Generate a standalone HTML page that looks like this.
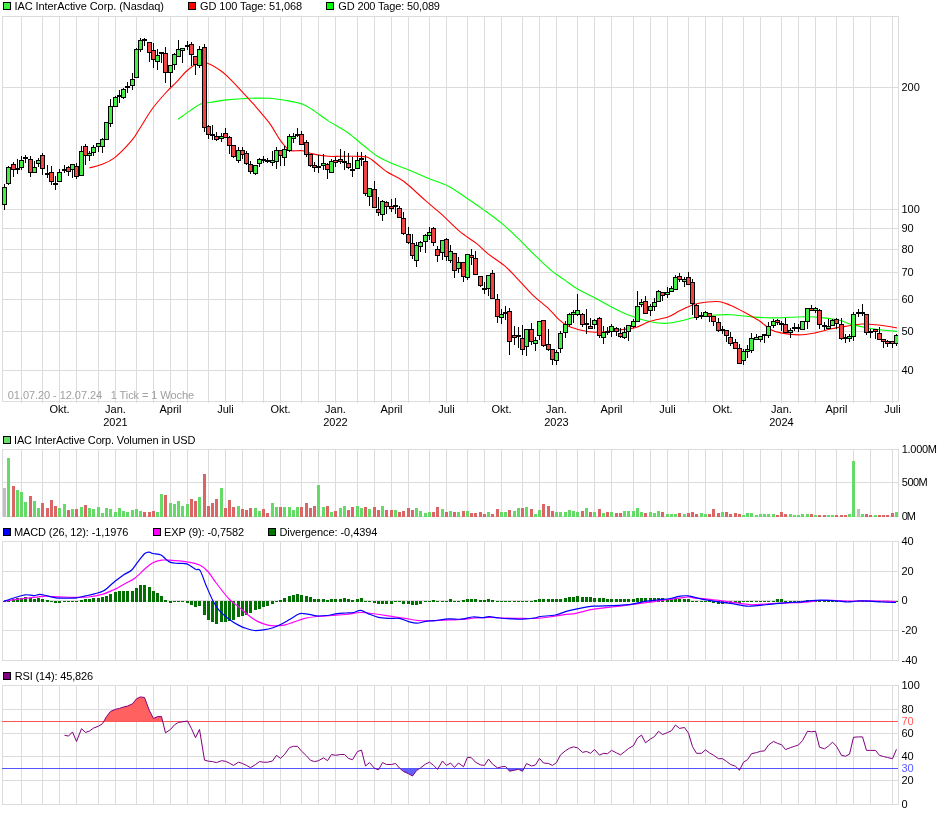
<!DOCTYPE html><html><head><meta charset="utf-8"><style>html,body{margin:0;padding:0;background:#fff;width:940px;height:814px;overflow:hidden}svg{display:block;will-change:transform;font-family:"Liberation Sans",sans-serif}</style></head><body><svg width="940" height="814" viewBox="0 0 940 814" font-family="Liberation Sans, sans-serif">
<rect width="940" height="814" fill="#fff"/>
<rect x="21" y="16" width="1" height="385" fill="#dcdcdc"/>
<rect x="42" y="16" width="1" height="385" fill="#dcdcdc"/>
<rect x="59" y="16" width="1" height="385" fill="#dcdcdc"/>
<rect x="76" y="16" width="1" height="385" fill="#dcdcdc"/>
<rect x="98" y="16" width="1" height="385" fill="#dcdcdc"/>
<rect x="115" y="16" width="1" height="385" fill="#dcdcdc"/>
<rect x="136" y="16" width="1" height="385" fill="#dcdcdc"/>
<rect x="153" y="16" width="1" height="385" fill="#dcdcdc"/>
<rect x="170" y="16" width="1" height="385" fill="#dcdcdc"/>
<rect x="187" y="16" width="1" height="385" fill="#dcdcdc"/>
<rect x="208" y="16" width="1" height="385" fill="#dcdcdc"/>
<rect x="225" y="16" width="1" height="385" fill="#dcdcdc"/>
<rect x="242" y="16" width="1" height="385" fill="#dcdcdc"/>
<rect x="263" y="16" width="1" height="385" fill="#dcdcdc"/>
<rect x="280" y="16" width="1" height="385" fill="#dcdcdc"/>
<rect x="301" y="16" width="1" height="385" fill="#dcdcdc"/>
<rect x="318" y="16" width="1" height="385" fill="#dcdcdc"/>
<rect x="335" y="16" width="1" height="385" fill="#dcdcdc"/>
<rect x="357" y="16" width="1" height="385" fill="#dcdcdc"/>
<rect x="374" y="16" width="1" height="385" fill="#dcdcdc"/>
<rect x="391" y="16" width="1" height="385" fill="#dcdcdc"/>
<rect x="408" y="16" width="1" height="385" fill="#dcdcdc"/>
<rect x="429" y="16" width="1" height="385" fill="#dcdcdc"/>
<rect x="446" y="16" width="1" height="385" fill="#dcdcdc"/>
<rect x="467" y="16" width="1" height="385" fill="#dcdcdc"/>
<rect x="484" y="16" width="1" height="385" fill="#dcdcdc"/>
<rect x="501" y="16" width="1" height="385" fill="#dcdcdc"/>
<rect x="522" y="16" width="1" height="385" fill="#dcdcdc"/>
<rect x="539" y="16" width="1" height="385" fill="#dcdcdc"/>
<rect x="556" y="16" width="1" height="385" fill="#dcdcdc"/>
<rect x="577" y="16" width="1" height="385" fill="#dcdcdc"/>
<rect x="594" y="16" width="1" height="385" fill="#dcdcdc"/>
<rect x="611" y="16" width="1" height="385" fill="#dcdcdc"/>
<rect x="633" y="16" width="1" height="385" fill="#dcdcdc"/>
<rect x="650" y="16" width="1" height="385" fill="#dcdcdc"/>
<rect x="667" y="16" width="1" height="385" fill="#dcdcdc"/>
<rect x="688" y="16" width="1" height="385" fill="#dcdcdc"/>
<rect x="705" y="16" width="1" height="385" fill="#dcdcdc"/>
<rect x="722" y="16" width="1" height="385" fill="#dcdcdc"/>
<rect x="743" y="16" width="1" height="385" fill="#dcdcdc"/>
<rect x="760" y="16" width="1" height="385" fill="#dcdcdc"/>
<rect x="781" y="16" width="1" height="385" fill="#dcdcdc"/>
<rect x="798" y="16" width="1" height="385" fill="#dcdcdc"/>
<rect x="815" y="16" width="1" height="385" fill="#dcdcdc"/>
<rect x="836" y="16" width="1" height="385" fill="#dcdcdc"/>
<rect x="853" y="16" width="1" height="385" fill="#dcdcdc"/>
<rect x="870" y="16" width="1" height="385" fill="#dcdcdc"/>
<rect x="892" y="16" width="1" height="385" fill="#dcdcdc"/>
<rect x="2" y="87" width="896" height="1" fill="#dcdcdc"/>
<rect x="2" y="209" width="896" height="1" fill="#dcdcdc"/>
<rect x="2" y="228" width="896" height="1" fill="#dcdcdc"/>
<rect x="2" y="249" width="896" height="1" fill="#dcdcdc"/>
<rect x="2" y="272" width="896" height="1" fill="#dcdcdc"/>
<rect x="2" y="299" width="896" height="1" fill="#dcdcdc"/>
<rect x="2" y="331" width="896" height="1" fill="#dcdcdc"/>
<rect x="2" y="370" width="896" height="1" fill="#dcdcdc"/>
<rect x="2.5" y="16.5" width="896" height="385" fill="none" stroke="#dcdcdc" stroke-width="1"/>
<text x="901.5" y="90.5" text-anchor="start" fill="#000" font-size="11">200</text>
<text x="901.5" y="212.5" text-anchor="start" fill="#000" font-size="11">100</text>
<text x="901.5" y="231.5" text-anchor="start" fill="#000" font-size="11">90</text>
<text x="901.5" y="252.5" text-anchor="start" fill="#000" font-size="11">80</text>
<text x="901.5" y="275.5" text-anchor="start" fill="#000" font-size="11">70</text>
<text x="901.5" y="302.5" text-anchor="start" fill="#000" font-size="11">60</text>
<text x="901.5" y="334.5" text-anchor="start" fill="#000" font-size="11">50</text>
<text x="901.5" y="373.5" text-anchor="start" fill="#000" font-size="11">40</text>
<rect x="21" y="401" width="1" height="2" fill="#dcdcdc"/>
<rect x="42" y="401" width="1" height="2" fill="#dcdcdc"/>
<rect x="59" y="401" width="1" height="2" fill="#dcdcdc"/>
<rect x="76" y="401" width="1" height="2" fill="#dcdcdc"/>
<rect x="98" y="401" width="1" height="2" fill="#dcdcdc"/>
<rect x="115" y="401" width="1" height="2" fill="#dcdcdc"/>
<rect x="136" y="401" width="1" height="2" fill="#dcdcdc"/>
<rect x="153" y="401" width="1" height="2" fill="#dcdcdc"/>
<rect x="170" y="401" width="1" height="2" fill="#dcdcdc"/>
<rect x="187" y="401" width="1" height="2" fill="#dcdcdc"/>
<rect x="208" y="401" width="1" height="2" fill="#dcdcdc"/>
<rect x="225" y="401" width="1" height="2" fill="#dcdcdc"/>
<rect x="242" y="401" width="1" height="2" fill="#dcdcdc"/>
<rect x="263" y="401" width="1" height="2" fill="#dcdcdc"/>
<rect x="280" y="401" width="1" height="2" fill="#dcdcdc"/>
<rect x="301" y="401" width="1" height="2" fill="#dcdcdc"/>
<rect x="318" y="401" width="1" height="2" fill="#dcdcdc"/>
<rect x="335" y="401" width="1" height="2" fill="#dcdcdc"/>
<rect x="357" y="401" width="1" height="2" fill="#dcdcdc"/>
<rect x="374" y="401" width="1" height="2" fill="#dcdcdc"/>
<rect x="391" y="401" width="1" height="2" fill="#dcdcdc"/>
<rect x="408" y="401" width="1" height="2" fill="#dcdcdc"/>
<rect x="429" y="401" width="1" height="2" fill="#dcdcdc"/>
<rect x="446" y="401" width="1" height="2" fill="#dcdcdc"/>
<rect x="467" y="401" width="1" height="2" fill="#dcdcdc"/>
<rect x="484" y="401" width="1" height="2" fill="#dcdcdc"/>
<rect x="501" y="401" width="1" height="2" fill="#dcdcdc"/>
<rect x="522" y="401" width="1" height="2" fill="#dcdcdc"/>
<rect x="539" y="401" width="1" height="2" fill="#dcdcdc"/>
<rect x="556" y="401" width="1" height="2" fill="#dcdcdc"/>
<rect x="577" y="401" width="1" height="2" fill="#dcdcdc"/>
<rect x="594" y="401" width="1" height="2" fill="#dcdcdc"/>
<rect x="611" y="401" width="1" height="2" fill="#dcdcdc"/>
<rect x="633" y="401" width="1" height="2" fill="#dcdcdc"/>
<rect x="650" y="401" width="1" height="2" fill="#dcdcdc"/>
<rect x="667" y="401" width="1" height="2" fill="#dcdcdc"/>
<rect x="688" y="401" width="1" height="2" fill="#dcdcdc"/>
<rect x="705" y="401" width="1" height="2" fill="#dcdcdc"/>
<rect x="722" y="401" width="1" height="2" fill="#dcdcdc"/>
<rect x="743" y="401" width="1" height="2" fill="#dcdcdc"/>
<rect x="760" y="401" width="1" height="2" fill="#dcdcdc"/>
<rect x="781" y="401" width="1" height="2" fill="#dcdcdc"/>
<rect x="798" y="401" width="1" height="2" fill="#dcdcdc"/>
<rect x="815" y="401" width="1" height="2" fill="#dcdcdc"/>
<rect x="836" y="401" width="1" height="2" fill="#dcdcdc"/>
<rect x="853" y="401" width="1" height="2" fill="#dcdcdc"/>
<rect x="870" y="401" width="1" height="2" fill="#dcdcdc"/>
<rect x="892" y="401" width="1" height="2" fill="#dcdcdc"/>
<rect x="3.5" y="2.5" width="7" height="7" fill="#40f040" stroke="#000" stroke-width="1"/>
<text x="14.4" y="10" text-anchor="start" fill="#000" font-size="11" textLength="149.62" lengthAdjust="spacing">IAC InterActive Corp. (Nasdaq)</text>
<rect x="188.5" y="2.5" width="7" height="7" fill="#ff0000" stroke="#000" stroke-width="1"/>
<text x="200.1" y="10" text-anchor="start" fill="#000" font-size="11" textLength="101.99" lengthAdjust="spacing">GD 100 Tage: 51,068</text>
<rect x="326.5" y="2.5" width="7" height="7" fill="#00ff00" stroke="#000" stroke-width="1"/>
<text x="338.3" y="10" text-anchor="start" fill="#000" font-size="11" textLength="101.69" lengthAdjust="spacing">GD 200 Tage: 50,089</text>
<text x="7.8" y="399" text-anchor="start" fill="#a0a0a0" font-size="11" textLength="94.32" lengthAdjust="spacing">01.07.20 - 12.07.24</text>
<text x="110.7" y="399" text-anchor="start" fill="#a0a0a0" font-size="11" textLength="83.38" lengthAdjust="spacing">1 Tick = 1 Woche</text>
<text x="59.5" y="413" text-anchor="middle" fill="#000" font-size="11">Okt.</text>
<text x="115.5" y="413" text-anchor="middle" fill="#000" font-size="11">Jan.</text>
<text x="170.5" y="413" text-anchor="middle" fill="#000" font-size="11">April</text>
<text x="225.5" y="413" text-anchor="middle" fill="#000" font-size="11">Juli</text>
<text x="280.5" y="413" text-anchor="middle" fill="#000" font-size="11">Okt.</text>
<text x="335.5" y="413" text-anchor="middle" fill="#000" font-size="11">Jan.</text>
<text x="391.5" y="413" text-anchor="middle" fill="#000" font-size="11">April</text>
<text x="446.5" y="413" text-anchor="middle" fill="#000" font-size="11">Juli</text>
<text x="501.5" y="413" text-anchor="middle" fill="#000" font-size="11">Okt.</text>
<text x="556.5" y="413" text-anchor="middle" fill="#000" font-size="11">Jan.</text>
<text x="611.5" y="413" text-anchor="middle" fill="#000" font-size="11">April</text>
<text x="667.5" y="413" text-anchor="middle" fill="#000" font-size="11">Juli</text>
<text x="722.5" y="413" text-anchor="middle" fill="#000" font-size="11">Okt.</text>
<text x="781.5" y="413" text-anchor="middle" fill="#000" font-size="11">Jan.</text>
<text x="836.5" y="413" text-anchor="middle" fill="#000" font-size="11">April</text>
<text x="892.5" y="413" text-anchor="middle" fill="#000" font-size="11">Juli</text>
<text x="115.5" y="426" text-anchor="middle" fill="#000" font-size="11">2021</text>
<text x="335.5" y="426" text-anchor="middle" fill="#000" font-size="11">2022</text>
<text x="556.5" y="426" text-anchor="middle" fill="#000" font-size="11">2023</text>
<text x="781.5" y="426" text-anchor="middle" fill="#000" font-size="11">2024</text>
<rect x="21" y="449" width="1" height="67" fill="#dcdcdc"/>
<rect x="42" y="449" width="1" height="67" fill="#dcdcdc"/>
<rect x="59" y="449" width="1" height="67" fill="#dcdcdc"/>
<rect x="76" y="449" width="1" height="67" fill="#dcdcdc"/>
<rect x="98" y="449" width="1" height="67" fill="#dcdcdc"/>
<rect x="115" y="449" width="1" height="67" fill="#dcdcdc"/>
<rect x="136" y="449" width="1" height="67" fill="#dcdcdc"/>
<rect x="153" y="449" width="1" height="67" fill="#dcdcdc"/>
<rect x="170" y="449" width="1" height="67" fill="#dcdcdc"/>
<rect x="187" y="449" width="1" height="67" fill="#dcdcdc"/>
<rect x="208" y="449" width="1" height="67" fill="#dcdcdc"/>
<rect x="225" y="449" width="1" height="67" fill="#dcdcdc"/>
<rect x="242" y="449" width="1" height="67" fill="#dcdcdc"/>
<rect x="263" y="449" width="1" height="67" fill="#dcdcdc"/>
<rect x="280" y="449" width="1" height="67" fill="#dcdcdc"/>
<rect x="301" y="449" width="1" height="67" fill="#dcdcdc"/>
<rect x="318" y="449" width="1" height="67" fill="#dcdcdc"/>
<rect x="335" y="449" width="1" height="67" fill="#dcdcdc"/>
<rect x="357" y="449" width="1" height="67" fill="#dcdcdc"/>
<rect x="374" y="449" width="1" height="67" fill="#dcdcdc"/>
<rect x="391" y="449" width="1" height="67" fill="#dcdcdc"/>
<rect x="408" y="449" width="1" height="67" fill="#dcdcdc"/>
<rect x="429" y="449" width="1" height="67" fill="#dcdcdc"/>
<rect x="446" y="449" width="1" height="67" fill="#dcdcdc"/>
<rect x="467" y="449" width="1" height="67" fill="#dcdcdc"/>
<rect x="484" y="449" width="1" height="67" fill="#dcdcdc"/>
<rect x="501" y="449" width="1" height="67" fill="#dcdcdc"/>
<rect x="522" y="449" width="1" height="67" fill="#dcdcdc"/>
<rect x="539" y="449" width="1" height="67" fill="#dcdcdc"/>
<rect x="556" y="449" width="1" height="67" fill="#dcdcdc"/>
<rect x="577" y="449" width="1" height="67" fill="#dcdcdc"/>
<rect x="594" y="449" width="1" height="67" fill="#dcdcdc"/>
<rect x="611" y="449" width="1" height="67" fill="#dcdcdc"/>
<rect x="633" y="449" width="1" height="67" fill="#dcdcdc"/>
<rect x="650" y="449" width="1" height="67" fill="#dcdcdc"/>
<rect x="667" y="449" width="1" height="67" fill="#dcdcdc"/>
<rect x="688" y="449" width="1" height="67" fill="#dcdcdc"/>
<rect x="705" y="449" width="1" height="67" fill="#dcdcdc"/>
<rect x="722" y="449" width="1" height="67" fill="#dcdcdc"/>
<rect x="743" y="449" width="1" height="67" fill="#dcdcdc"/>
<rect x="760" y="449" width="1" height="67" fill="#dcdcdc"/>
<rect x="781" y="449" width="1" height="67" fill="#dcdcdc"/>
<rect x="798" y="449" width="1" height="67" fill="#dcdcdc"/>
<rect x="815" y="449" width="1" height="67" fill="#dcdcdc"/>
<rect x="836" y="449" width="1" height="67" fill="#dcdcdc"/>
<rect x="853" y="449" width="1" height="67" fill="#dcdcdc"/>
<rect x="870" y="449" width="1" height="67" fill="#dcdcdc"/>
<rect x="892" y="449" width="1" height="67" fill="#dcdcdc"/>
<rect x="2" y="482" width="896" height="1" fill="#dcdcdc"/>
<rect x="2.5" y="449.5" width="896" height="67" fill="none" stroke="#dcdcdc" stroke-width="1"/>
<rect x="3.5" y="436.5" width="7" height="7" fill="#66dd66" stroke="#000" stroke-width="1"/>
<text x="14.0" y="444" text-anchor="start" fill="#000" font-size="11" textLength="181.48" lengthAdjust="spacing">IAC InterActive Corp. Volumen in USD</text>
<text x="901.8" y="452.5" text-anchor="start" fill="#000" font-size="11" textLength="35.10" lengthAdjust="spacing">1.000M</text>
<text x="901.8" y="485.5" text-anchor="start" fill="#000" font-size="11" textLength="25.90" lengthAdjust="spacing">500M</text>
<text x="901.8" y="519.5" text-anchor="start" fill="#000" font-size="11" textLength="14.00" lengthAdjust="spacing">0M</text>
<rect x="21" y="541" width="1" height="119" fill="#dcdcdc"/>
<rect x="42" y="541" width="1" height="119" fill="#dcdcdc"/>
<rect x="59" y="541" width="1" height="119" fill="#dcdcdc"/>
<rect x="76" y="541" width="1" height="119" fill="#dcdcdc"/>
<rect x="98" y="541" width="1" height="119" fill="#dcdcdc"/>
<rect x="115" y="541" width="1" height="119" fill="#dcdcdc"/>
<rect x="136" y="541" width="1" height="119" fill="#dcdcdc"/>
<rect x="153" y="541" width="1" height="119" fill="#dcdcdc"/>
<rect x="170" y="541" width="1" height="119" fill="#dcdcdc"/>
<rect x="187" y="541" width="1" height="119" fill="#dcdcdc"/>
<rect x="208" y="541" width="1" height="119" fill="#dcdcdc"/>
<rect x="225" y="541" width="1" height="119" fill="#dcdcdc"/>
<rect x="242" y="541" width="1" height="119" fill="#dcdcdc"/>
<rect x="263" y="541" width="1" height="119" fill="#dcdcdc"/>
<rect x="280" y="541" width="1" height="119" fill="#dcdcdc"/>
<rect x="301" y="541" width="1" height="119" fill="#dcdcdc"/>
<rect x="318" y="541" width="1" height="119" fill="#dcdcdc"/>
<rect x="335" y="541" width="1" height="119" fill="#dcdcdc"/>
<rect x="357" y="541" width="1" height="119" fill="#dcdcdc"/>
<rect x="374" y="541" width="1" height="119" fill="#dcdcdc"/>
<rect x="391" y="541" width="1" height="119" fill="#dcdcdc"/>
<rect x="408" y="541" width="1" height="119" fill="#dcdcdc"/>
<rect x="429" y="541" width="1" height="119" fill="#dcdcdc"/>
<rect x="446" y="541" width="1" height="119" fill="#dcdcdc"/>
<rect x="467" y="541" width="1" height="119" fill="#dcdcdc"/>
<rect x="484" y="541" width="1" height="119" fill="#dcdcdc"/>
<rect x="501" y="541" width="1" height="119" fill="#dcdcdc"/>
<rect x="522" y="541" width="1" height="119" fill="#dcdcdc"/>
<rect x="539" y="541" width="1" height="119" fill="#dcdcdc"/>
<rect x="556" y="541" width="1" height="119" fill="#dcdcdc"/>
<rect x="577" y="541" width="1" height="119" fill="#dcdcdc"/>
<rect x="594" y="541" width="1" height="119" fill="#dcdcdc"/>
<rect x="611" y="541" width="1" height="119" fill="#dcdcdc"/>
<rect x="633" y="541" width="1" height="119" fill="#dcdcdc"/>
<rect x="650" y="541" width="1" height="119" fill="#dcdcdc"/>
<rect x="667" y="541" width="1" height="119" fill="#dcdcdc"/>
<rect x="688" y="541" width="1" height="119" fill="#dcdcdc"/>
<rect x="705" y="541" width="1" height="119" fill="#dcdcdc"/>
<rect x="722" y="541" width="1" height="119" fill="#dcdcdc"/>
<rect x="743" y="541" width="1" height="119" fill="#dcdcdc"/>
<rect x="760" y="541" width="1" height="119" fill="#dcdcdc"/>
<rect x="781" y="541" width="1" height="119" fill="#dcdcdc"/>
<rect x="798" y="541" width="1" height="119" fill="#dcdcdc"/>
<rect x="815" y="541" width="1" height="119" fill="#dcdcdc"/>
<rect x="836" y="541" width="1" height="119" fill="#dcdcdc"/>
<rect x="853" y="541" width="1" height="119" fill="#dcdcdc"/>
<rect x="870" y="541" width="1" height="119" fill="#dcdcdc"/>
<rect x="892" y="541" width="1" height="119" fill="#dcdcdc"/>
<rect x="2" y="571" width="896" height="1" fill="#dcdcdc"/>
<rect x="2" y="600" width="896" height="1" fill="#dcdcdc"/>
<rect x="2" y="630" width="896" height="1" fill="#dcdcdc"/>
<rect x="2.5" y="541.5" width="896" height="119" fill="none" stroke="#dcdcdc" stroke-width="1"/>
<rect x="3.5" y="528.5" width="7" height="7" fill="#0000ff" stroke="#000" stroke-width="1"/>
<text x="14.0" y="536" text-anchor="start" fill="#000" font-size="11" textLength="114.28" lengthAdjust="spacing">MACD (26, 12): -1,1976</text>
<rect x="153.5" y="528.5" width="7" height="7" fill="#ff00ff" stroke="#000" stroke-width="1"/>
<text x="164.0" y="536" text-anchor="start" fill="#000" font-size="11" textLength="80.13" lengthAdjust="spacing">EXP (9): -0,7582</text>
<rect x="268.5" y="528.5" width="7" height="7" fill="#007700" stroke="#000" stroke-width="1"/>
<text x="279.4" y="536" text-anchor="start" fill="#000" font-size="11" textLength="98.06" lengthAdjust="spacing">Divergence: -0,4394</text>
<text x="901.5" y="544.5" text-anchor="start" fill="#000" font-size="11">40</text>
<text x="901.5" y="574.5" text-anchor="start" fill="#000" font-size="11">20</text>
<text x="901.5" y="603.5" text-anchor="start" fill="#000" font-size="11">0</text>
<text x="901.5" y="633.5" text-anchor="start" fill="#000" font-size="11">-20</text>
<text x="901.5" y="663.5" text-anchor="start" fill="#000" font-size="11">-40</text>
<rect x="21" y="685" width="1" height="119" fill="#dcdcdc"/>
<rect x="42" y="685" width="1" height="119" fill="#dcdcdc"/>
<rect x="59" y="685" width="1" height="119" fill="#dcdcdc"/>
<rect x="76" y="685" width="1" height="119" fill="#dcdcdc"/>
<rect x="98" y="685" width="1" height="119" fill="#dcdcdc"/>
<rect x="115" y="685" width="1" height="119" fill="#dcdcdc"/>
<rect x="136" y="685" width="1" height="119" fill="#dcdcdc"/>
<rect x="153" y="685" width="1" height="119" fill="#dcdcdc"/>
<rect x="170" y="685" width="1" height="119" fill="#dcdcdc"/>
<rect x="187" y="685" width="1" height="119" fill="#dcdcdc"/>
<rect x="208" y="685" width="1" height="119" fill="#dcdcdc"/>
<rect x="225" y="685" width="1" height="119" fill="#dcdcdc"/>
<rect x="242" y="685" width="1" height="119" fill="#dcdcdc"/>
<rect x="263" y="685" width="1" height="119" fill="#dcdcdc"/>
<rect x="280" y="685" width="1" height="119" fill="#dcdcdc"/>
<rect x="301" y="685" width="1" height="119" fill="#dcdcdc"/>
<rect x="318" y="685" width="1" height="119" fill="#dcdcdc"/>
<rect x="335" y="685" width="1" height="119" fill="#dcdcdc"/>
<rect x="357" y="685" width="1" height="119" fill="#dcdcdc"/>
<rect x="374" y="685" width="1" height="119" fill="#dcdcdc"/>
<rect x="391" y="685" width="1" height="119" fill="#dcdcdc"/>
<rect x="408" y="685" width="1" height="119" fill="#dcdcdc"/>
<rect x="429" y="685" width="1" height="119" fill="#dcdcdc"/>
<rect x="446" y="685" width="1" height="119" fill="#dcdcdc"/>
<rect x="467" y="685" width="1" height="119" fill="#dcdcdc"/>
<rect x="484" y="685" width="1" height="119" fill="#dcdcdc"/>
<rect x="501" y="685" width="1" height="119" fill="#dcdcdc"/>
<rect x="522" y="685" width="1" height="119" fill="#dcdcdc"/>
<rect x="539" y="685" width="1" height="119" fill="#dcdcdc"/>
<rect x="556" y="685" width="1" height="119" fill="#dcdcdc"/>
<rect x="577" y="685" width="1" height="119" fill="#dcdcdc"/>
<rect x="594" y="685" width="1" height="119" fill="#dcdcdc"/>
<rect x="611" y="685" width="1" height="119" fill="#dcdcdc"/>
<rect x="633" y="685" width="1" height="119" fill="#dcdcdc"/>
<rect x="650" y="685" width="1" height="119" fill="#dcdcdc"/>
<rect x="667" y="685" width="1" height="119" fill="#dcdcdc"/>
<rect x="688" y="685" width="1" height="119" fill="#dcdcdc"/>
<rect x="705" y="685" width="1" height="119" fill="#dcdcdc"/>
<rect x="722" y="685" width="1" height="119" fill="#dcdcdc"/>
<rect x="743" y="685" width="1" height="119" fill="#dcdcdc"/>
<rect x="760" y="685" width="1" height="119" fill="#dcdcdc"/>
<rect x="781" y="685" width="1" height="119" fill="#dcdcdc"/>
<rect x="798" y="685" width="1" height="119" fill="#dcdcdc"/>
<rect x="815" y="685" width="1" height="119" fill="#dcdcdc"/>
<rect x="836" y="685" width="1" height="119" fill="#dcdcdc"/>
<rect x="853" y="685" width="1" height="119" fill="#dcdcdc"/>
<rect x="870" y="685" width="1" height="119" fill="#dcdcdc"/>
<rect x="892" y="685" width="1" height="119" fill="#dcdcdc"/>
<rect x="2" y="709" width="896" height="1" fill="#dcdcdc"/>
<rect x="2" y="733" width="896" height="1" fill="#dcdcdc"/>
<rect x="2" y="756" width="896" height="1" fill="#dcdcdc"/>
<rect x="2" y="780" width="896" height="1" fill="#dcdcdc"/>
<rect x="2.5" y="685.5" width="896" height="119" fill="none" stroke="#dcdcdc" stroke-width="1"/>
<rect x="3.5" y="672.5" width="7" height="7" fill="#800080" stroke="#000" stroke-width="1"/>
<text x="14.8" y="680" text-anchor="start" fill="#000" font-size="11" textLength="78.32" lengthAdjust="spacing">RSI (14): 45,826</text>
<text x="901.5" y="688.5" text-anchor="start" fill="#000" font-size="11">100</text>
<text x="901.5" y="712.5" text-anchor="start" fill="#000" font-size="11">80</text>
<text x="901.5" y="736.5" text-anchor="start" fill="#000" font-size="11">60</text>
<text x="901.5" y="759.5" text-anchor="start" fill="#000" font-size="11">40</text>
<text x="901.5" y="783.5" text-anchor="start" fill="#000" font-size="11">20</text>
<text x="901.5" y="807.5" text-anchor="start" fill="#000" font-size="11">0</text>
<text x="901.5" y="724.5" text-anchor="start" fill="#ff5a5a" font-size="11">70</text>
<text x="901.5" y="771.5" text-anchor="start" fill="#5a5aff" font-size="11">30</text>
<defs><clipPath id="cp"><rect x="2" y="16" width="896" height="385"/></clipPath></defs>
<g clip-path="url(#cp)">
<path d="M178.10,119.20 C180.12,117.77 186.47,113.13 190.20,110.60 C193.93,108.07 197.07,105.38 200.50,104.00 C203.93,102.62 206.50,102.98 210.80,102.30 C215.10,101.62 219.82,100.57 226.30,99.90 C232.78,99.23 242.53,98.57 249.70,98.30 C256.87,98.03 263.42,97.97 269.30,98.30 C275.18,98.63 279.43,99.32 285.00,100.30 C290.57,101.28 297.78,102.40 302.70,104.20 C307.62,106.00 310.23,108.32 314.50,111.10 C318.77,113.88 322.73,117.30 328.30,120.90 C333.87,124.50 342.02,128.60 347.90,132.70 C353.78,136.80 358.68,141.57 363.60,145.50 C368.52,149.43 373.13,153.52 377.40,156.30 C381.67,159.08 383.98,159.93 389.20,162.20 C394.42,164.47 402.33,167.27 408.70,169.90 C415.07,172.53 420.78,175.28 427.40,178.00 C434.02,180.72 442.18,183.08 448.40,186.20 C454.62,189.32 458.87,192.80 464.70,196.70 C470.53,200.60 477.17,205.12 483.40,209.60 C489.63,214.08 496.27,218.75 502.10,223.60 C507.93,228.45 512.95,233.45 518.40,238.70 C523.85,243.95 529.35,249.83 534.80,255.10 C540.25,260.37 546.15,266.17 551.10,270.30 C556.05,274.43 559.87,276.65 564.50,279.90 C569.13,283.15 573.48,286.63 578.90,289.80 C584.32,292.97 591.27,295.88 597.00,298.90 C602.73,301.92 607.57,305.03 613.30,307.90 C619.03,310.77 625.37,313.83 631.40,316.10 C637.43,318.37 643.48,320.30 649.50,321.50 C655.52,322.70 661.48,323.60 667.50,323.30 C673.52,323.00 680.47,320.85 685.60,319.70 C690.73,318.55 693.78,317.15 698.30,316.40 C702.82,315.65 707.38,315.48 712.70,315.20 C718.02,314.92 723.92,314.45 730.20,314.70 C736.48,314.95 743.67,316.17 750.40,316.70 C757.13,317.23 763.85,317.80 770.60,317.90 C777.35,318.00 784.83,317.50 790.90,317.30 C796.97,317.10 801.62,316.60 807.00,316.70 C812.38,316.80 817.80,317.30 823.20,317.90 C828.60,318.50 834.68,319.22 839.40,320.30 C844.12,321.38 846.78,323.12 851.50,324.40 C856.22,325.68 862.65,327.07 867.70,328.00 C872.75,328.93 876.92,329.43 881.80,330.00 C886.68,330.57 894.47,331.17 897.00,331.40" fill="none" stroke="#00ff00" stroke-width="1.1"/>
<path d="M89.50,167.90 C91.37,167.38 96.55,166.47 100.70,164.80 C104.85,163.13 109.25,161.92 114.40,157.90 C119.55,153.88 127.30,145.72 131.60,140.70 C135.90,135.68 136.75,133.12 140.20,127.80 C143.65,122.48 148.00,114.68 152.30,108.80 C156.60,102.92 161.98,96.93 166.00,92.50 C170.02,88.07 172.95,85.78 176.40,82.20 C179.85,78.62 183.27,74.02 186.70,71.00 C190.13,67.98 193.55,65.40 197.00,64.10 C200.45,62.80 203.38,62.05 207.40,63.20 C211.42,64.35 217.38,68.42 221.10,71.00 C224.82,73.58 226.25,75.30 229.70,78.70 C233.15,82.10 237.82,87.15 241.80,91.40 C245.78,95.65 249.02,98.95 253.60,104.20 C258.18,109.45 265.05,117.17 269.30,122.90 C273.55,128.63 276.15,134.35 279.10,138.60 C282.05,142.85 285.03,146.37 287.00,148.40 C288.97,150.43 288.28,150.40 290.90,150.80 C293.52,151.20 299.10,150.28 302.70,150.80 C306.30,151.32 308.23,152.98 312.50,153.90 C316.77,154.82 323.70,155.90 328.30,156.30 C332.90,156.70 335.52,156.30 340.10,156.30 C344.68,156.30 351.22,156.13 355.80,156.30 C360.38,156.47 364.00,155.98 367.60,157.30 C371.20,158.62 374.13,161.75 377.40,164.20 C380.67,166.65 382.77,169.12 387.20,172.00 C391.63,174.88 397.70,176.80 404.00,181.50 C410.30,186.20 418.77,194.75 425.00,200.20 C431.23,205.65 435.57,208.95 441.40,214.20 C447.23,219.45 454.17,226.83 460.00,231.70 C465.83,236.57 471.72,239.70 476.40,243.40 C481.08,247.10 483.43,250.20 488.10,253.90 C492.77,257.60 499.73,261.70 504.40,265.60 C509.07,269.50 511.42,272.43 516.10,277.30 C520.78,282.17 527.05,289.55 532.50,294.80 C537.95,300.05 544.38,304.65 548.80,308.80 C553.22,312.95 555.78,316.83 559.00,319.70 C562.22,322.57 564.18,324.20 568.10,326.00 C572.02,327.80 577.98,329.45 582.50,330.50 C587.02,331.55 590.97,332.15 595.20,332.30 C599.43,332.45 603.38,331.85 607.90,331.40 C612.42,330.95 617.62,330.25 622.30,329.60 C626.98,328.95 631.38,328.88 636.00,327.50 C640.62,326.12 644.67,323.05 650.00,321.30 C655.33,319.55 662.97,318.78 668.00,317.00 C673.03,315.22 675.75,312.72 680.20,310.60 C684.65,308.48 690.18,305.73 694.70,304.30 C699.22,302.87 703.07,302.43 707.30,302.00 C711.53,301.57 716.28,301.17 720.10,301.70 C723.92,302.23 726.15,303.45 730.20,305.20 C734.25,306.95 739.68,309.68 744.40,312.20 C749.12,314.72 754.13,317.43 758.50,320.30 C762.87,323.17 766.88,327.30 770.60,329.40 C774.32,331.50 776.08,331.98 780.80,332.90 C785.52,333.82 793.18,334.90 798.90,334.90 C804.62,334.90 809.70,333.92 815.10,332.90 C820.50,331.88 825.90,329.95 831.30,328.80 C836.70,327.65 842.45,326.80 847.50,326.00 C852.55,325.20 856.88,324.20 861.60,324.00 C866.32,323.80 871.75,324.47 875.80,324.80 C879.85,325.13 882.37,325.47 885.90,326.00 C889.43,326.53 895.15,327.67 897.00,328.00" fill="none" stroke="#ff0000" stroke-width="1.1"/>
</g>
<g clip-path="url(#cp)" shape-rendering="crispEdges">
<rect x="4" y="184" width="1" height="26" fill="#000"/>
<rect x="2" y="187" width="5" height="18" fill="#000"/>
<rect x="3" y="188" width="3" height="16" fill="#44ee44"/>
<rect x="8" y="166" width="1" height="19" fill="#000"/>
<rect x="6" y="167" width="5" height="17" fill="#000"/>
<rect x="7" y="168" width="3" height="15" fill="#44ee44"/>
<rect x="13" y="162" width="1" height="15" fill="#000"/>
<rect x="11" y="164" width="5" height="6" fill="#000"/>
<rect x="12" y="165" width="3" height="4" fill="#ee4444"/>
<rect x="17" y="159" width="1" height="15" fill="#000"/>
<rect x="15" y="168" width="5" height="2" fill="#000"/>
<rect x="21" y="156" width="1" height="14" fill="#000"/>
<rect x="19" y="160" width="5" height="8" fill="#000"/>
<rect x="20" y="161" width="3" height="6" fill="#44ee44"/>
<rect x="25" y="155" width="1" height="8" fill="#000"/>
<rect x="23" y="157" width="5" height="2" fill="#000"/>
<rect x="30" y="156" width="1" height="21" fill="#000"/>
<rect x="28" y="159" width="5" height="14" fill="#000"/>
<rect x="29" y="160" width="3" height="12" fill="#ee4444"/>
<rect x="34" y="161" width="1" height="12" fill="#000"/>
<rect x="32" y="167" width="5" height="6" fill="#000"/>
<rect x="33" y="168" width="3" height="4" fill="#44ee44"/>
<rect x="38" y="158" width="1" height="9" fill="#000"/>
<rect x="36" y="160" width="5" height="4" fill="#000"/>
<rect x="37" y="161" width="3" height="2" fill="#44ee44"/>
<rect x="42" y="153" width="1" height="22" fill="#000"/>
<rect x="40" y="155" width="5" height="14" fill="#000"/>
<rect x="41" y="156" width="3" height="12" fill="#ee4444"/>
<rect x="47" y="165" width="1" height="13" fill="#000"/>
<rect x="45" y="173" width="5" height="2" fill="#000"/>
<rect x="51" y="166" width="1" height="19" fill="#000"/>
<rect x="49" y="172" width="5" height="10" fill="#000"/>
<rect x="50" y="173" width="3" height="8" fill="#ee4444"/>
<rect x="55" y="176" width="1" height="14" fill="#000"/>
<rect x="53" y="183" width="5" height="2" fill="#000"/>
<rect x="59" y="169" width="1" height="13" fill="#000"/>
<rect x="57" y="172" width="5" height="10" fill="#000"/>
<rect x="58" y="173" width="3" height="8" fill="#44ee44"/>
<rect x="64" y="165" width="1" height="8" fill="#000"/>
<rect x="62" y="169" width="5" height="2" fill="#000"/>
<rect x="68" y="166" width="1" height="10" fill="#000"/>
<rect x="66" y="167" width="5" height="5" fill="#000"/>
<rect x="67" y="168" width="3" height="3" fill="#ee4444"/>
<rect x="72" y="164" width="1" height="14" fill="#000"/>
<rect x="70" y="164" width="5" height="6" fill="#000"/>
<rect x="71" y="165" width="3" height="4" fill="#44ee44"/>
<rect x="76" y="163" width="1" height="16" fill="#000"/>
<rect x="74" y="166" width="5" height="11" fill="#000"/>
<rect x="75" y="167" width="3" height="9" fill="#ee4444"/>
<rect x="81" y="146" width="1" height="30" fill="#000"/>
<rect x="79" y="151" width="5" height="25" fill="#000"/>
<rect x="80" y="152" width="3" height="23" fill="#44ee44"/>
<rect x="85" y="144" width="1" height="21" fill="#000"/>
<rect x="83" y="146" width="5" height="10" fill="#000"/>
<rect x="84" y="147" width="3" height="8" fill="#ee4444"/>
<rect x="89" y="151" width="1" height="10" fill="#000"/>
<rect x="87" y="153" width="5" height="3" fill="#000"/>
<rect x="88" y="154" width="3" height="1" fill="#44ee44"/>
<rect x="93" y="145" width="1" height="11" fill="#000"/>
<rect x="91" y="147" width="5" height="6" fill="#000"/>
<rect x="92" y="148" width="3" height="4" fill="#44ee44"/>
<rect x="98" y="143" width="1" height="9" fill="#000"/>
<rect x="96" y="143" width="5" height="4" fill="#000"/>
<rect x="97" y="144" width="3" height="2" fill="#44ee44"/>
<rect x="102" y="138" width="1" height="15" fill="#000"/>
<rect x="100" y="139" width="5" height="8" fill="#000"/>
<rect x="101" y="140" width="3" height="6" fill="#44ee44"/>
<rect x="106" y="122" width="1" height="18" fill="#000"/>
<rect x="104" y="122" width="5" height="18" fill="#000"/>
<rect x="105" y="123" width="3" height="16" fill="#44ee44"/>
<rect x="110" y="99" width="1" height="28" fill="#000"/>
<rect x="108" y="106" width="5" height="18" fill="#000"/>
<rect x="109" y="107" width="3" height="16" fill="#44ee44"/>
<rect x="115" y="96" width="1" height="11" fill="#000"/>
<rect x="113" y="97" width="5" height="10" fill="#000"/>
<rect x="114" y="98" width="3" height="8" fill="#44ee44"/>
<rect x="119" y="90" width="1" height="13" fill="#000"/>
<rect x="117" y="95" width="5" height="2" fill="#000"/>
<rect x="123" y="88" width="1" height="11" fill="#000"/>
<rect x="121" y="89" width="5" height="9" fill="#000"/>
<rect x="122" y="90" width="3" height="7" fill="#44ee44"/>
<rect x="127" y="82" width="1" height="11" fill="#000"/>
<rect x="125" y="86" width="5" height="2" fill="#000"/>
<rect x="132" y="73" width="1" height="17" fill="#000"/>
<rect x="130" y="79" width="5" height="7" fill="#000"/>
<rect x="131" y="80" width="3" height="5" fill="#44ee44"/>
<rect x="136" y="48" width="1" height="30" fill="#000"/>
<rect x="134" y="49" width="5" height="29" fill="#000"/>
<rect x="135" y="50" width="3" height="27" fill="#44ee44"/>
<rect x="140" y="38" width="1" height="14" fill="#000"/>
<rect x="138" y="40" width="5" height="10" fill="#000"/>
<rect x="139" y="41" width="3" height="8" fill="#44ee44"/>
<rect x="144" y="38" width="1" height="8" fill="#000"/>
<rect x="142" y="39" width="5" height="2" fill="#000"/>
<rect x="149" y="42" width="1" height="20" fill="#000"/>
<rect x="147" y="42" width="5" height="11" fill="#000"/>
<rect x="148" y="43" width="3" height="9" fill="#ee4444"/>
<rect x="153" y="43" width="1" height="25" fill="#000"/>
<rect x="151" y="50" width="5" height="10" fill="#000"/>
<rect x="152" y="51" width="3" height="8" fill="#ee4444"/>
<rect x="157" y="49" width="1" height="21" fill="#000"/>
<rect x="155" y="55" width="5" height="7" fill="#000"/>
<rect x="156" y="56" width="3" height="5" fill="#44ee44"/>
<rect x="161" y="52" width="1" height="11" fill="#000"/>
<rect x="159" y="52" width="5" height="2" fill="#000"/>
<rect x="165" y="47" width="1" height="36" fill="#000"/>
<rect x="163" y="53" width="5" height="20" fill="#000"/>
<rect x="164" y="54" width="3" height="18" fill="#ee4444"/>
<rect x="170" y="65" width="1" height="22" fill="#000"/>
<rect x="168" y="65" width="5" height="8" fill="#000"/>
<rect x="169" y="66" width="3" height="6" fill="#44ee44"/>
<rect x="174" y="53" width="1" height="17" fill="#000"/>
<rect x="172" y="54" width="5" height="11" fill="#000"/>
<rect x="173" y="55" width="3" height="9" fill="#44ee44"/>
<rect x="178" y="40" width="1" height="17" fill="#000"/>
<rect x="176" y="49" width="5" height="8" fill="#000"/>
<rect x="177" y="50" width="3" height="6" fill="#44ee44"/>
<rect x="182" y="48" width="1" height="15" fill="#000"/>
<rect x="180" y="48" width="5" height="3" fill="#000"/>
<rect x="181" y="49" width="3" height="1" fill="#44ee44"/>
<rect x="187" y="41" width="1" height="9" fill="#000"/>
<rect x="185" y="45" width="5" height="2" fill="#000"/>
<rect x="191" y="42" width="1" height="24" fill="#000"/>
<rect x="189" y="44" width="5" height="11" fill="#000"/>
<rect x="190" y="45" width="3" height="9" fill="#ee4444"/>
<rect x="195" y="56" width="1" height="19" fill="#000"/>
<rect x="193" y="56" width="5" height="9" fill="#000"/>
<rect x="194" y="57" width="3" height="7" fill="#ee4444"/>
<rect x="199" y="46" width="1" height="22" fill="#000"/>
<rect x="197" y="49" width="5" height="17" fill="#000"/>
<rect x="198" y="50" width="3" height="15" fill="#44ee44"/>
<rect x="204" y="44" width="1" height="88" fill="#000"/>
<rect x="202" y="47" width="5" height="81" fill="#000"/>
<rect x="203" y="48" width="3" height="79" fill="#ee4444"/>
<rect x="208" y="125" width="1" height="14" fill="#000"/>
<rect x="206" y="126" width="5" height="9" fill="#000"/>
<rect x="207" y="127" width="3" height="7" fill="#ee4444"/>
<rect x="212" y="125" width="1" height="15" fill="#000"/>
<rect x="210" y="134" width="5" height="2" fill="#000"/>
<rect x="216" y="132" width="1" height="9" fill="#000"/>
<rect x="214" y="136" width="5" height="4" fill="#000"/>
<rect x="215" y="137" width="3" height="2" fill="#ee4444"/>
<rect x="221" y="133" width="1" height="9" fill="#000"/>
<rect x="219" y="136" width="5" height="3" fill="#000"/>
<rect x="220" y="137" width="3" height="1" fill="#44ee44"/>
<rect x="225" y="128" width="1" height="9" fill="#000"/>
<rect x="223" y="133" width="5" height="5" fill="#000"/>
<rect x="224" y="134" width="3" height="3" fill="#ee4444"/>
<rect x="229" y="136" width="1" height="18" fill="#000"/>
<rect x="227" y="137" width="5" height="9" fill="#000"/>
<rect x="228" y="138" width="3" height="7" fill="#ee4444"/>
<rect x="233" y="145" width="1" height="13" fill="#000"/>
<rect x="231" y="145" width="5" height="12" fill="#000"/>
<rect x="232" y="146" width="3" height="10" fill="#ee4444"/>
<rect x="238" y="147" width="1" height="16" fill="#000"/>
<rect x="236" y="150" width="5" height="11" fill="#000"/>
<rect x="237" y="151" width="3" height="9" fill="#44ee44"/>
<rect x="242" y="147" width="1" height="12" fill="#000"/>
<rect x="240" y="150" width="5" height="5" fill="#000"/>
<rect x="241" y="151" width="3" height="3" fill="#ee4444"/>
<rect x="246" y="151" width="1" height="14" fill="#000"/>
<rect x="244" y="153" width="5" height="11" fill="#000"/>
<rect x="245" y="154" width="3" height="9" fill="#ee4444"/>
<rect x="250" y="161" width="1" height="13" fill="#000"/>
<rect x="248" y="164" width="5" height="8" fill="#000"/>
<rect x="249" y="165" width="3" height="6" fill="#ee4444"/>
<rect x="255" y="165" width="1" height="10" fill="#000"/>
<rect x="253" y="165" width="5" height="9" fill="#000"/>
<rect x="254" y="166" width="3" height="7" fill="#44ee44"/>
<rect x="259" y="158" width="1" height="9" fill="#000"/>
<rect x="257" y="159" width="5" height="5" fill="#000"/>
<rect x="258" y="160" width="3" height="3" fill="#44ee44"/>
<rect x="263" y="156" width="1" height="7" fill="#000"/>
<rect x="261" y="159" width="5" height="2" fill="#000"/>
<rect x="267" y="158" width="1" height="5" fill="#000"/>
<rect x="265" y="160" width="5" height="2" fill="#000"/>
<rect x="272" y="151" width="1" height="15" fill="#000"/>
<rect x="270" y="160" width="5" height="3" fill="#000"/>
<rect x="271" y="161" width="3" height="1" fill="#44ee44"/>
<rect x="276" y="147" width="1" height="22" fill="#000"/>
<rect x="274" y="150" width="5" height="12" fill="#000"/>
<rect x="275" y="151" width="3" height="10" fill="#44ee44"/>
<rect x="280" y="150" width="1" height="16" fill="#000"/>
<rect x="278" y="150" width="5" height="6" fill="#000"/>
<rect x="279" y="151" width="3" height="4" fill="#ee4444"/>
<rect x="284" y="146" width="1" height="20" fill="#000"/>
<rect x="282" y="149" width="5" height="9" fill="#000"/>
<rect x="283" y="150" width="3" height="7" fill="#44ee44"/>
<rect x="289" y="134" width="1" height="18" fill="#000"/>
<rect x="287" y="136" width="5" height="15" fill="#000"/>
<rect x="288" y="137" width="3" height="13" fill="#44ee44"/>
<rect x="293" y="133" width="1" height="10" fill="#000"/>
<rect x="291" y="136" width="5" height="3" fill="#000"/>
<rect x="292" y="137" width="3" height="1" fill="#44ee44"/>
<rect x="297" y="128" width="1" height="9" fill="#000"/>
<rect x="295" y="134" width="5" height="2" fill="#000"/>
<rect x="301" y="131" width="1" height="13" fill="#000"/>
<rect x="299" y="134" width="5" height="11" fill="#000"/>
<rect x="300" y="135" width="3" height="9" fill="#ee4444"/>
<rect x="306" y="140" width="1" height="17" fill="#000"/>
<rect x="304" y="142" width="5" height="13" fill="#000"/>
<rect x="305" y="143" width="3" height="11" fill="#ee4444"/>
<rect x="310" y="154" width="1" height="13" fill="#000"/>
<rect x="308" y="154" width="5" height="12" fill="#000"/>
<rect x="309" y="155" width="3" height="10" fill="#ee4444"/>
<rect x="314" y="162" width="1" height="10" fill="#000"/>
<rect x="312" y="165" width="5" height="3" fill="#000"/>
<rect x="313" y="166" width="3" height="1" fill="#ee4444"/>
<rect x="318" y="155" width="1" height="18" fill="#000"/>
<rect x="316" y="166" width="5" height="2" fill="#000"/>
<rect x="323" y="154" width="1" height="16" fill="#000"/>
<rect x="321" y="163" width="5" height="3" fill="#000"/>
<rect x="322" y="164" width="3" height="1" fill="#44ee44"/>
<rect x="327" y="163" width="1" height="16" fill="#000"/>
<rect x="325" y="164" width="5" height="6" fill="#000"/>
<rect x="326" y="165" width="3" height="4" fill="#ee4444"/>
<rect x="331" y="159" width="1" height="14" fill="#000"/>
<rect x="329" y="161" width="5" height="12" fill="#000"/>
<rect x="330" y="162" width="3" height="10" fill="#44ee44"/>
<rect x="335" y="157" width="1" height="10" fill="#000"/>
<rect x="333" y="160" width="5" height="3" fill="#000"/>
<rect x="334" y="161" width="3" height="1" fill="#ee4444"/>
<rect x="340" y="149" width="1" height="15" fill="#000"/>
<rect x="338" y="159" width="5" height="3" fill="#000"/>
<rect x="339" y="160" width="3" height="1" fill="#ee4444"/>
<rect x="344" y="151" width="1" height="19" fill="#000"/>
<rect x="342" y="161" width="5" height="2" fill="#000"/>
<rect x="348" y="153" width="1" height="16" fill="#000"/>
<rect x="346" y="163" width="5" height="5" fill="#000"/>
<rect x="347" y="164" width="3" height="3" fill="#ee4444"/>
<rect x="352" y="157" width="1" height="20" fill="#000"/>
<rect x="350" y="169" width="5" height="2" fill="#000"/>
<rect x="357" y="152" width="1" height="17" fill="#000"/>
<rect x="355" y="160" width="5" height="9" fill="#000"/>
<rect x="356" y="161" width="3" height="7" fill="#44ee44"/>
<rect x="361" y="152" width="1" height="14" fill="#000"/>
<rect x="359" y="158" width="5" height="2" fill="#000"/>
<rect x="365" y="155" width="1" height="41" fill="#000"/>
<rect x="363" y="161" width="5" height="33" fill="#000"/>
<rect x="364" y="162" width="3" height="31" fill="#ee4444"/>
<rect x="369" y="188" width="1" height="18" fill="#000"/>
<rect x="367" y="188" width="5" height="9" fill="#000"/>
<rect x="368" y="189" width="3" height="7" fill="#44ee44"/>
<rect x="374" y="181" width="1" height="27" fill="#000"/>
<rect x="372" y="189" width="5" height="19" fill="#000"/>
<rect x="373" y="190" width="3" height="17" fill="#ee4444"/>
<rect x="378" y="197" width="1" height="19" fill="#000"/>
<rect x="376" y="209" width="5" height="4" fill="#000"/>
<rect x="377" y="210" width="3" height="2" fill="#ee4444"/>
<rect x="382" y="200" width="1" height="21" fill="#000"/>
<rect x="380" y="201" width="5" height="14" fill="#000"/>
<rect x="381" y="202" width="3" height="12" fill="#44ee44"/>
<rect x="386" y="201" width="1" height="13" fill="#000"/>
<rect x="384" y="202" width="5" height="5" fill="#000"/>
<rect x="385" y="203" width="3" height="3" fill="#ee4444"/>
<rect x="391" y="199" width="1" height="13" fill="#000"/>
<rect x="389" y="206" width="5" height="3" fill="#000"/>
<rect x="390" y="207" width="3" height="1" fill="#ee4444"/>
<rect x="395" y="198" width="1" height="16" fill="#000"/>
<rect x="393" y="205" width="5" height="2" fill="#000"/>
<rect x="399" y="206" width="1" height="12" fill="#000"/>
<rect x="397" y="208" width="5" height="10" fill="#000"/>
<rect x="398" y="209" width="3" height="8" fill="#ee4444"/>
<rect x="403" y="212" width="1" height="23" fill="#000"/>
<rect x="401" y="218" width="5" height="16" fill="#000"/>
<rect x="402" y="219" width="3" height="14" fill="#ee4444"/>
<rect x="408" y="227" width="1" height="17" fill="#000"/>
<rect x="406" y="234" width="5" height="9" fill="#000"/>
<rect x="407" y="235" width="3" height="7" fill="#ee4444"/>
<rect x="412" y="234" width="1" height="25" fill="#000"/>
<rect x="410" y="243" width="5" height="13" fill="#000"/>
<rect x="411" y="244" width="3" height="11" fill="#ee4444"/>
<rect x="416" y="242" width="1" height="25" fill="#000"/>
<rect x="414" y="245" width="5" height="16" fill="#000"/>
<rect x="415" y="246" width="3" height="14" fill="#44ee44"/>
<rect x="420" y="241" width="1" height="11" fill="#000"/>
<rect x="418" y="242" width="5" height="5" fill="#000"/>
<rect x="419" y="243" width="3" height="3" fill="#44ee44"/>
<rect x="425" y="234" width="1" height="19" fill="#000"/>
<rect x="423" y="235" width="5" height="7" fill="#000"/>
<rect x="424" y="236" width="3" height="5" fill="#44ee44"/>
<rect x="429" y="227" width="1" height="13" fill="#000"/>
<rect x="427" y="232" width="5" height="4" fill="#000"/>
<rect x="428" y="233" width="3" height="2" fill="#44ee44"/>
<rect x="433" y="227" width="1" height="19" fill="#000"/>
<rect x="431" y="228" width="5" height="15" fill="#000"/>
<rect x="432" y="229" width="3" height="13" fill="#ee4444"/>
<rect x="437" y="246" width="1" height="16" fill="#000"/>
<rect x="435" y="249" width="5" height="7" fill="#000"/>
<rect x="436" y="250" width="3" height="5" fill="#ee4444"/>
<rect x="442" y="240" width="1" height="20" fill="#000"/>
<rect x="440" y="240" width="5" height="13" fill="#000"/>
<rect x="441" y="241" width="3" height="11" fill="#44ee44"/>
<rect x="446" y="238" width="1" height="23" fill="#000"/>
<rect x="444" y="239" width="5" height="18" fill="#000"/>
<rect x="445" y="240" width="3" height="16" fill="#ee4444"/>
<rect x="450" y="245" width="1" height="18" fill="#000"/>
<rect x="448" y="251" width="5" height="10" fill="#000"/>
<rect x="449" y="252" width="3" height="8" fill="#44ee44"/>
<rect x="454" y="253" width="1" height="25" fill="#000"/>
<rect x="452" y="253" width="5" height="18" fill="#000"/>
<rect x="453" y="254" width="3" height="16" fill="#ee4444"/>
<rect x="458" y="257" width="1" height="16" fill="#000"/>
<rect x="456" y="262" width="5" height="7" fill="#000"/>
<rect x="457" y="263" width="3" height="5" fill="#44ee44"/>
<rect x="463" y="262" width="1" height="20" fill="#000"/>
<rect x="461" y="262" width="5" height="15" fill="#000"/>
<rect x="462" y="263" width="3" height="13" fill="#ee4444"/>
<rect x="467" y="254" width="1" height="26" fill="#000"/>
<rect x="465" y="254" width="5" height="24" fill="#000"/>
<rect x="466" y="255" width="3" height="22" fill="#44ee44"/>
<rect x="471" y="249" width="1" height="16" fill="#000"/>
<rect x="469" y="255" width="5" height="3" fill="#000"/>
<rect x="470" y="256" width="3" height="1" fill="#ee4444"/>
<rect x="475" y="251" width="1" height="24" fill="#000"/>
<rect x="473" y="258" width="5" height="17" fill="#000"/>
<rect x="474" y="259" width="3" height="15" fill="#ee4444"/>
<rect x="480" y="276" width="1" height="11" fill="#000"/>
<rect x="478" y="276" width="5" height="10" fill="#000"/>
<rect x="479" y="277" width="3" height="8" fill="#ee4444"/>
<rect x="484" y="282" width="1" height="12" fill="#000"/>
<rect x="482" y="288" width="5" height="2" fill="#000"/>
<rect x="488" y="275" width="1" height="21" fill="#000"/>
<rect x="486" y="275" width="5" height="14" fill="#000"/>
<rect x="487" y="276" width="3" height="12" fill="#44ee44"/>
<rect x="492" y="270" width="1" height="29" fill="#000"/>
<rect x="490" y="273" width="5" height="26" fill="#000"/>
<rect x="491" y="274" width="3" height="24" fill="#ee4444"/>
<rect x="497" y="294" width="1" height="29" fill="#000"/>
<rect x="495" y="299" width="5" height="18" fill="#000"/>
<rect x="496" y="300" width="3" height="16" fill="#ee4444"/>
<rect x="501" y="309" width="1" height="15" fill="#000"/>
<rect x="499" y="314" width="5" height="4" fill="#000"/>
<rect x="500" y="315" width="3" height="2" fill="#44ee44"/>
<rect x="505" y="306" width="1" height="14" fill="#000"/>
<rect x="503" y="312" width="5" height="2" fill="#000"/>
<rect x="509" y="308" width="1" height="47" fill="#000"/>
<rect x="507" y="311" width="5" height="31" fill="#000"/>
<rect x="508" y="312" width="3" height="29" fill="#ee4444"/>
<rect x="514" y="326" width="1" height="19" fill="#000"/>
<rect x="512" y="335" width="5" height="3" fill="#000"/>
<rect x="513" y="336" width="3" height="1" fill="#ee4444"/>
<rect x="518" y="327" width="1" height="21" fill="#000"/>
<rect x="516" y="335" width="5" height="2" fill="#000"/>
<rect x="522" y="325" width="1" height="30" fill="#000"/>
<rect x="520" y="338" width="5" height="12" fill="#000"/>
<rect x="521" y="339" width="3" height="10" fill="#ee4444"/>
<rect x="526" y="329" width="1" height="27" fill="#000"/>
<rect x="524" y="329" width="5" height="18" fill="#000"/>
<rect x="525" y="330" width="3" height="16" fill="#44ee44"/>
<rect x="531" y="323" width="1" height="22" fill="#000"/>
<rect x="529" y="329" width="5" height="13" fill="#000"/>
<rect x="530" y="330" width="3" height="11" fill="#ee4444"/>
<rect x="535" y="337" width="1" height="14" fill="#000"/>
<rect x="533" y="340" width="5" height="4" fill="#000"/>
<rect x="534" y="341" width="3" height="2" fill="#44ee44"/>
<rect x="539" y="321" width="1" height="19" fill="#000"/>
<rect x="537" y="321" width="5" height="15" fill="#000"/>
<rect x="538" y="322" width="3" height="13" fill="#44ee44"/>
<rect x="543" y="320" width="1" height="27" fill="#000"/>
<rect x="541" y="320" width="5" height="26" fill="#000"/>
<rect x="542" y="321" width="3" height="24" fill="#ee4444"/>
<rect x="548" y="329" width="1" height="22" fill="#000"/>
<rect x="546" y="344" width="5" height="6" fill="#000"/>
<rect x="547" y="345" width="3" height="4" fill="#ee4444"/>
<rect x="552" y="349" width="1" height="16" fill="#000"/>
<rect x="550" y="349" width="5" height="11" fill="#000"/>
<rect x="551" y="350" width="3" height="9" fill="#ee4444"/>
<rect x="556" y="350" width="1" height="15" fill="#000"/>
<rect x="554" y="352" width="5" height="9" fill="#000"/>
<rect x="555" y="353" width="3" height="7" fill="#44ee44"/>
<rect x="560" y="331" width="1" height="22" fill="#000"/>
<rect x="558" y="333" width="5" height="16" fill="#000"/>
<rect x="559" y="334" width="3" height="14" fill="#44ee44"/>
<rect x="565" y="321" width="1" height="17" fill="#000"/>
<rect x="563" y="324" width="5" height="9" fill="#000"/>
<rect x="564" y="325" width="3" height="7" fill="#44ee44"/>
<rect x="569" y="313" width="1" height="14" fill="#000"/>
<rect x="567" y="314" width="5" height="11" fill="#000"/>
<rect x="568" y="315" width="3" height="9" fill="#44ee44"/>
<rect x="573" y="310" width="1" height="13" fill="#000"/>
<rect x="571" y="312" width="5" height="3" fill="#000"/>
<rect x="572" y="313" width="3" height="1" fill="#44ee44"/>
<rect x="577" y="294" width="1" height="22" fill="#000"/>
<rect x="575" y="310" width="5" height="5" fill="#000"/>
<rect x="576" y="311" width="3" height="3" fill="#44ee44"/>
<rect x="582" y="313" width="1" height="14" fill="#000"/>
<rect x="580" y="314" width="5" height="11" fill="#000"/>
<rect x="581" y="315" width="3" height="9" fill="#ee4444"/>
<rect x="586" y="309" width="1" height="25" fill="#000"/>
<rect x="584" y="323" width="5" height="2" fill="#000"/>
<rect x="590" y="318" width="1" height="11" fill="#000"/>
<rect x="588" y="326" width="5" height="3" fill="#000"/>
<rect x="589" y="327" width="3" height="1" fill="#ee4444"/>
<rect x="594" y="319" width="1" height="10" fill="#000"/>
<rect x="592" y="320" width="5" height="5" fill="#000"/>
<rect x="593" y="321" width="3" height="3" fill="#44ee44"/>
<rect x="599" y="317" width="1" height="21" fill="#000"/>
<rect x="597" y="318" width="5" height="18" fill="#000"/>
<rect x="598" y="319" width="3" height="16" fill="#ee4444"/>
<rect x="603" y="326" width="1" height="18" fill="#000"/>
<rect x="601" y="332" width="5" height="6" fill="#000"/>
<rect x="602" y="333" width="3" height="4" fill="#44ee44"/>
<rect x="607" y="327" width="1" height="8" fill="#000"/>
<rect x="605" y="331" width="5" height="2" fill="#000"/>
<rect x="611" y="324" width="1" height="13" fill="#000"/>
<rect x="609" y="326" width="5" height="6" fill="#000"/>
<rect x="610" y="327" width="3" height="4" fill="#44ee44"/>
<rect x="616" y="327" width="1" height="9" fill="#000"/>
<rect x="614" y="328" width="5" height="4" fill="#000"/>
<rect x="615" y="329" width="3" height="2" fill="#ee4444"/>
<rect x="620" y="328" width="1" height="10" fill="#000"/>
<rect x="618" y="333" width="5" height="4" fill="#000"/>
<rect x="619" y="334" width="3" height="2" fill="#ee4444"/>
<rect x="624" y="327" width="1" height="12" fill="#000"/>
<rect x="622" y="332" width="5" height="6" fill="#000"/>
<rect x="623" y="333" width="3" height="4" fill="#44ee44"/>
<rect x="628" y="325" width="1" height="16" fill="#000"/>
<rect x="626" y="325" width="5" height="7" fill="#000"/>
<rect x="627" y="326" width="3" height="5" fill="#44ee44"/>
<rect x="633" y="319" width="1" height="9" fill="#000"/>
<rect x="631" y="321" width="5" height="6" fill="#000"/>
<rect x="632" y="322" width="3" height="4" fill="#44ee44"/>
<rect x="637" y="291" width="1" height="30" fill="#000"/>
<rect x="635" y="306" width="5" height="16" fill="#000"/>
<rect x="636" y="307" width="3" height="14" fill="#44ee44"/>
<rect x="641" y="299" width="1" height="8" fill="#000"/>
<rect x="639" y="302" width="5" height="3" fill="#000"/>
<rect x="640" y="303" width="3" height="1" fill="#44ee44"/>
<rect x="645" y="296" width="1" height="18" fill="#000"/>
<rect x="643" y="301" width="5" height="13" fill="#000"/>
<rect x="644" y="302" width="3" height="11" fill="#ee4444"/>
<rect x="650" y="304" width="1" height="12" fill="#000"/>
<rect x="648" y="306" width="5" height="5" fill="#000"/>
<rect x="649" y="307" width="3" height="3" fill="#44ee44"/>
<rect x="654" y="298" width="1" height="13" fill="#000"/>
<rect x="652" y="302" width="5" height="5" fill="#000"/>
<rect x="653" y="303" width="3" height="3" fill="#44ee44"/>
<rect x="658" y="290" width="1" height="12" fill="#000"/>
<rect x="656" y="291" width="5" height="11" fill="#000"/>
<rect x="657" y="292" width="3" height="9" fill="#44ee44"/>
<rect x="662" y="292" width="1" height="9" fill="#000"/>
<rect x="660" y="292" width="5" height="4" fill="#000"/>
<rect x="661" y="293" width="3" height="2" fill="#ee4444"/>
<rect x="667" y="287" width="1" height="11" fill="#000"/>
<rect x="665" y="292" width="5" height="3" fill="#000"/>
<rect x="666" y="293" width="3" height="1" fill="#44ee44"/>
<rect x="671" y="286" width="1" height="6" fill="#000"/>
<rect x="669" y="288" width="5" height="4" fill="#000"/>
<rect x="670" y="289" width="3" height="2" fill="#44ee44"/>
<rect x="675" y="275" width="1" height="15" fill="#000"/>
<rect x="673" y="277" width="5" height="13" fill="#000"/>
<rect x="674" y="278" width="3" height="11" fill="#44ee44"/>
<rect x="679" y="273" width="1" height="9" fill="#000"/>
<rect x="677" y="276" width="5" height="4" fill="#000"/>
<rect x="678" y="277" width="3" height="2" fill="#ee4444"/>
<rect x="684" y="277" width="1" height="10" fill="#000"/>
<rect x="682" y="279" width="5" height="3" fill="#000"/>
<rect x="683" y="280" width="3" height="1" fill="#44ee44"/>
<rect x="688" y="272" width="1" height="13" fill="#000"/>
<rect x="686" y="277" width="5" height="8" fill="#000"/>
<rect x="687" y="278" width="3" height="6" fill="#ee4444"/>
<rect x="692" y="279" width="1" height="36" fill="#000"/>
<rect x="690" y="282" width="5" height="22" fill="#000"/>
<rect x="691" y="283" width="3" height="20" fill="#ee4444"/>
<rect x="696" y="304" width="1" height="16" fill="#000"/>
<rect x="694" y="305" width="5" height="13" fill="#000"/>
<rect x="695" y="306" width="3" height="11" fill="#ee4444"/>
<rect x="701" y="312" width="1" height="7" fill="#000"/>
<rect x="699" y="315" width="5" height="2" fill="#000"/>
<rect x="705" y="311" width="1" height="6" fill="#000"/>
<rect x="703" y="312" width="5" height="5" fill="#000"/>
<rect x="704" y="313" width="3" height="3" fill="#44ee44"/>
<rect x="709" y="313" width="1" height="9" fill="#000"/>
<rect x="707" y="313" width="5" height="4" fill="#000"/>
<rect x="708" y="314" width="3" height="2" fill="#ee4444"/>
<rect x="713" y="316" width="1" height="10" fill="#000"/>
<rect x="711" y="316" width="5" height="6" fill="#000"/>
<rect x="712" y="317" width="3" height="4" fill="#ee4444"/>
<rect x="718" y="318" width="1" height="14" fill="#000"/>
<rect x="716" y="322" width="5" height="9" fill="#000"/>
<rect x="717" y="323" width="3" height="7" fill="#ee4444"/>
<rect x="722" y="326" width="1" height="8" fill="#000"/>
<rect x="720" y="329" width="5" height="2" fill="#000"/>
<rect x="726" y="330" width="1" height="12" fill="#000"/>
<rect x="724" y="330" width="5" height="6" fill="#000"/>
<rect x="725" y="331" width="3" height="4" fill="#ee4444"/>
<rect x="730" y="332" width="1" height="14" fill="#000"/>
<rect x="728" y="337" width="5" height="7" fill="#000"/>
<rect x="729" y="338" width="3" height="5" fill="#ee4444"/>
<rect x="735" y="339" width="1" height="10" fill="#000"/>
<rect x="733" y="342" width="5" height="7" fill="#000"/>
<rect x="734" y="343" width="3" height="5" fill="#ee4444"/>
<rect x="739" y="344" width="1" height="20" fill="#000"/>
<rect x="737" y="348" width="5" height="16" fill="#000"/>
<rect x="738" y="349" width="3" height="14" fill="#ee4444"/>
<rect x="743" y="349" width="1" height="16" fill="#000"/>
<rect x="741" y="351" width="5" height="10" fill="#000"/>
<rect x="742" y="352" width="3" height="8" fill="#44ee44"/>
<rect x="747" y="345" width="1" height="13" fill="#000"/>
<rect x="745" y="349" width="5" height="3" fill="#000"/>
<rect x="746" y="350" width="3" height="1" fill="#44ee44"/>
<rect x="751" y="333" width="1" height="20" fill="#000"/>
<rect x="749" y="338" width="5" height="13" fill="#000"/>
<rect x="750" y="339" width="3" height="11" fill="#44ee44"/>
<rect x="756" y="334" width="1" height="5" fill="#000"/>
<rect x="754" y="337" width="5" height="3" fill="#000"/>
<rect x="755" y="338" width="3" height="1" fill="#44ee44"/>
<rect x="760" y="336" width="1" height="6" fill="#000"/>
<rect x="758" y="336" width="5" height="4" fill="#000"/>
<rect x="759" y="337" width="3" height="2" fill="#44ee44"/>
<rect x="764" y="334" width="1" height="9" fill="#000"/>
<rect x="762" y="334" width="5" height="2" fill="#000"/>
<rect x="768" y="322" width="1" height="16" fill="#000"/>
<rect x="766" y="326" width="5" height="10" fill="#000"/>
<rect x="767" y="327" width="3" height="8" fill="#44ee44"/>
<rect x="773" y="319" width="1" height="9" fill="#000"/>
<rect x="771" y="321" width="5" height="5" fill="#000"/>
<rect x="772" y="322" width="3" height="3" fill="#44ee44"/>
<rect x="777" y="319" width="1" height="6" fill="#000"/>
<rect x="775" y="320" width="5" height="3" fill="#000"/>
<rect x="776" y="321" width="3" height="1" fill="#ee4444"/>
<rect x="781" y="321" width="1" height="10" fill="#000"/>
<rect x="779" y="323" width="5" height="2" fill="#000"/>
<rect x="785" y="318" width="1" height="15" fill="#000"/>
<rect x="783" y="324" width="5" height="9" fill="#000"/>
<rect x="784" y="325" width="3" height="7" fill="#ee4444"/>
<rect x="790" y="328" width="1" height="10" fill="#000"/>
<rect x="788" y="330" width="5" height="3" fill="#000"/>
<rect x="789" y="331" width="3" height="1" fill="#44ee44"/>
<rect x="794" y="323" width="1" height="8" fill="#000"/>
<rect x="792" y="327" width="5" height="2" fill="#000"/>
<rect x="798" y="324" width="1" height="8" fill="#000"/>
<rect x="796" y="327" width="5" height="2" fill="#000"/>
<rect x="802" y="321" width="1" height="9" fill="#000"/>
<rect x="800" y="321" width="5" height="9" fill="#000"/>
<rect x="801" y="322" width="3" height="7" fill="#44ee44"/>
<rect x="807" y="308" width="1" height="21" fill="#000"/>
<rect x="805" y="308" width="5" height="14" fill="#000"/>
<rect x="806" y="309" width="3" height="12" fill="#44ee44"/>
<rect x="811" y="305" width="1" height="6" fill="#000"/>
<rect x="809" y="308" width="5" height="3" fill="#000"/>
<rect x="810" y="309" width="3" height="1" fill="#ee4444"/>
<rect x="815" y="307" width="1" height="6" fill="#000"/>
<rect x="813" y="308" width="5" height="3" fill="#000"/>
<rect x="814" y="309" width="3" height="1" fill="#44ee44"/>
<rect x="819" y="309" width="1" height="20" fill="#000"/>
<rect x="817" y="310" width="5" height="15" fill="#000"/>
<rect x="818" y="311" width="3" height="13" fill="#ee4444"/>
<rect x="824" y="322" width="1" height="8" fill="#000"/>
<rect x="822" y="325" width="5" height="2" fill="#000"/>
<rect x="828" y="319" width="1" height="10" fill="#000"/>
<rect x="826" y="326" width="5" height="3" fill="#000"/>
<rect x="827" y="327" width="3" height="1" fill="#44ee44"/>
<rect x="832" y="319" width="1" height="7" fill="#000"/>
<rect x="830" y="320" width="5" height="6" fill="#000"/>
<rect x="831" y="321" width="3" height="4" fill="#44ee44"/>
<rect x="836" y="318" width="1" height="11" fill="#000"/>
<rect x="834" y="319" width="5" height="5" fill="#000"/>
<rect x="835" y="320" width="3" height="3" fill="#ee4444"/>
<rect x="841" y="318" width="1" height="22" fill="#000"/>
<rect x="839" y="324" width="5" height="15" fill="#000"/>
<rect x="840" y="325" width="3" height="13" fill="#ee4444"/>
<rect x="845" y="334" width="1" height="9" fill="#000"/>
<rect x="843" y="337" width="5" height="2" fill="#000"/>
<rect x="849" y="334" width="1" height="8" fill="#000"/>
<rect x="847" y="336" width="5" height="3" fill="#000"/>
<rect x="848" y="337" width="3" height="1" fill="#44ee44"/>
<rect x="853" y="312" width="1" height="29" fill="#000"/>
<rect x="851" y="314" width="5" height="23" fill="#000"/>
<rect x="852" y="315" width="3" height="21" fill="#44ee44"/>
<rect x="858" y="309" width="1" height="8" fill="#000"/>
<rect x="856" y="312" width="5" height="2" fill="#000"/>
<rect x="862" y="304" width="1" height="12" fill="#000"/>
<rect x="860" y="312" width="5" height="2" fill="#000"/>
<rect x="866" y="314" width="1" height="21" fill="#000"/>
<rect x="864" y="314" width="5" height="19" fill="#000"/>
<rect x="865" y="315" width="3" height="17" fill="#ee4444"/>
<rect x="870" y="329" width="1" height="9" fill="#000"/>
<rect x="868" y="331" width="5" height="2" fill="#000"/>
<rect x="875" y="329" width="1" height="10" fill="#000"/>
<rect x="873" y="329" width="5" height="3" fill="#000"/>
<rect x="874" y="330" width="3" height="1" fill="#ee4444"/>
<rect x="879" y="327" width="1" height="13" fill="#000"/>
<rect x="877" y="333" width="5" height="7" fill="#000"/>
<rect x="878" y="334" width="3" height="5" fill="#ee4444"/>
<rect x="883" y="339" width="1" height="9" fill="#000"/>
<rect x="881" y="339" width="5" height="3" fill="#000"/>
<rect x="882" y="340" width="3" height="1" fill="#ee4444"/>
<rect x="887" y="340" width="1" height="7" fill="#000"/>
<rect x="885" y="341" width="5" height="3" fill="#000"/>
<rect x="886" y="342" width="3" height="1" fill="#ee4444"/>
<rect x="892" y="341" width="1" height="7" fill="#000"/>
<rect x="890" y="341" width="5" height="3" fill="#000"/>
<rect x="891" y="342" width="3" height="1" fill="#ee4444"/>
<rect x="896" y="334" width="1" height="12" fill="#000"/>
<rect x="894" y="335" width="5" height="9" fill="#000"/>
<rect x="895" y="336" width="3" height="7" fill="#44ee44"/>
</g>
<g shape-rendering="crispEdges">
<rect x="3" y="488" width="3" height="29" fill="#c0c0c0"/>
<rect x="7" y="458" width="3" height="59" fill="#66da66"/>
<rect x="12" y="486" width="3" height="31" fill="#da6666"/>
<rect x="16" y="490" width="3" height="27" fill="#66da66"/>
<rect x="20" y="492" width="3" height="25" fill="#66da66"/>
<rect x="24" y="502" width="3" height="15" fill="#66da66"/>
<rect x="29" y="496" width="3" height="21" fill="#da6666"/>
<rect x="33" y="501" width="3" height="16" fill="#66da66"/>
<rect x="37" y="508" width="3" height="9" fill="#66da66"/>
<rect x="41" y="503" width="3" height="14" fill="#da6666"/>
<rect x="46" y="508" width="3" height="9" fill="#da6666"/>
<rect x="50" y="500" width="3" height="17" fill="#da6666"/>
<rect x="54" y="506" width="3" height="11" fill="#da6666"/>
<rect x="58" y="508" width="3" height="9" fill="#66da66"/>
<rect x="63" y="504" width="3" height="13" fill="#66da66"/>
<rect x="67" y="510" width="3" height="7" fill="#da6666"/>
<rect x="71" y="509" width="3" height="8" fill="#66da66"/>
<rect x="75" y="509" width="3" height="8" fill="#da6666"/>
<rect x="80" y="507" width="3" height="10" fill="#66da66"/>
<rect x="84" y="505" width="3" height="12" fill="#da6666"/>
<rect x="88" y="508" width="3" height="9" fill="#66da66"/>
<rect x="92" y="509" width="3" height="8" fill="#66da66"/>
<rect x="97" y="507" width="3" height="10" fill="#66da66"/>
<rect x="101" y="513" width="3" height="4" fill="#66da66"/>
<rect x="105" y="508" width="3" height="9" fill="#66da66"/>
<rect x="109" y="509" width="3" height="8" fill="#66da66"/>
<rect x="114" y="512" width="3" height="5" fill="#66da66"/>
<rect x="118" y="508" width="3" height="9" fill="#66da66"/>
<rect x="122" y="511" width="3" height="6" fill="#66da66"/>
<rect x="126" y="512" width="3" height="5" fill="#66da66"/>
<rect x="131" y="510" width="3" height="7" fill="#66da66"/>
<rect x="135" y="509" width="3" height="8" fill="#66da66"/>
<rect x="139" y="511" width="3" height="6" fill="#66da66"/>
<rect x="143" y="512" width="3" height="5" fill="#da6666"/>
<rect x="148" y="512" width="3" height="5" fill="#da6666"/>
<rect x="152" y="511" width="3" height="6" fill="#da6666"/>
<rect x="156" y="512" width="3" height="5" fill="#66da66"/>
<rect x="160" y="494" width="3" height="23" fill="#66da66"/>
<rect x="164" y="495" width="3" height="22" fill="#da6666"/>
<rect x="169" y="503" width="3" height="14" fill="#66da66"/>
<rect x="173" y="504" width="3" height="13" fill="#66da66"/>
<rect x="177" y="501" width="3" height="16" fill="#66da66"/>
<rect x="181" y="506" width="3" height="11" fill="#66da66"/>
<rect x="186" y="504" width="3" height="13" fill="#66da66"/>
<rect x="190" y="499" width="3" height="18" fill="#da6666"/>
<rect x="194" y="501" width="3" height="16" fill="#da6666"/>
<rect x="198" y="497" width="3" height="20" fill="#66da66"/>
<rect x="203" y="474" width="3" height="43" fill="#da6666"/>
<rect x="207" y="506" width="3" height="11" fill="#da6666"/>
<rect x="211" y="503" width="3" height="14" fill="#da6666"/>
<rect x="215" y="499" width="3" height="18" fill="#da6666"/>
<rect x="220" y="488" width="3" height="29" fill="#66da66"/>
<rect x="224" y="508" width="3" height="9" fill="#da6666"/>
<rect x="228" y="500" width="3" height="17" fill="#da6666"/>
<rect x="232" y="507" width="3" height="10" fill="#da6666"/>
<rect x="237" y="506" width="3" height="11" fill="#66da66"/>
<rect x="241" y="509" width="3" height="8" fill="#da6666"/>
<rect x="245" y="510" width="3" height="7" fill="#da6666"/>
<rect x="249" y="508" width="3" height="9" fill="#da6666"/>
<rect x="254" y="508" width="3" height="9" fill="#66da66"/>
<rect x="258" y="511" width="3" height="6" fill="#66da66"/>
<rect x="262" y="509" width="3" height="8" fill="#da6666"/>
<rect x="266" y="513" width="3" height="4" fill="#da6666"/>
<rect x="271" y="503" width="3" height="14" fill="#66da66"/>
<rect x="275" y="507" width="3" height="10" fill="#66da66"/>
<rect x="279" y="507" width="3" height="10" fill="#da6666"/>
<rect x="283" y="507" width="3" height="10" fill="#66da66"/>
<rect x="288" y="507" width="3" height="10" fill="#66da66"/>
<rect x="292" y="510" width="3" height="7" fill="#66da66"/>
<rect x="296" y="507" width="3" height="10" fill="#66da66"/>
<rect x="300" y="507" width="3" height="10" fill="#da6666"/>
<rect x="305" y="503" width="3" height="14" fill="#da6666"/>
<rect x="309" y="508" width="3" height="9" fill="#da6666"/>
<rect x="313" y="506" width="3" height="11" fill="#da6666"/>
<rect x="317" y="485" width="3" height="32" fill="#66da66"/>
<rect x="322" y="507" width="3" height="10" fill="#66da66"/>
<rect x="326" y="506" width="3" height="11" fill="#da6666"/>
<rect x="330" y="512" width="3" height="5" fill="#66da66"/>
<rect x="334" y="511" width="3" height="6" fill="#da6666"/>
<rect x="339" y="508" width="3" height="9" fill="#66da66"/>
<rect x="343" y="506" width="3" height="11" fill="#66da66"/>
<rect x="347" y="510" width="3" height="7" fill="#da6666"/>
<rect x="351" y="507" width="3" height="10" fill="#da6666"/>
<rect x="356" y="506" width="3" height="11" fill="#66da66"/>
<rect x="360" y="508" width="3" height="9" fill="#66da66"/>
<rect x="364" y="507" width="3" height="10" fill="#da6666"/>
<rect x="368" y="509" width="3" height="8" fill="#66da66"/>
<rect x="373" y="507" width="3" height="10" fill="#da6666"/>
<rect x="377" y="510" width="3" height="7" fill="#da6666"/>
<rect x="381" y="506" width="3" height="11" fill="#66da66"/>
<rect x="385" y="510" width="3" height="7" fill="#da6666"/>
<rect x="390" y="510" width="3" height="7" fill="#da6666"/>
<rect x="394" y="510" width="3" height="7" fill="#66da66"/>
<rect x="398" y="512" width="3" height="5" fill="#da6666"/>
<rect x="402" y="511" width="3" height="6" fill="#da6666"/>
<rect x="407" y="508" width="3" height="9" fill="#da6666"/>
<rect x="411" y="510" width="3" height="7" fill="#da6666"/>
<rect x="415" y="508" width="3" height="9" fill="#66da66"/>
<rect x="419" y="511" width="3" height="6" fill="#66da66"/>
<rect x="424" y="513" width="3" height="4" fill="#66da66"/>
<rect x="428" y="512" width="3" height="5" fill="#66da66"/>
<rect x="432" y="512" width="3" height="5" fill="#da6666"/>
<rect x="436" y="507" width="3" height="10" fill="#da6666"/>
<rect x="441" y="509" width="3" height="8" fill="#66da66"/>
<rect x="445" y="512" width="3" height="5" fill="#da6666"/>
<rect x="449" y="511" width="3" height="6" fill="#66da66"/>
<rect x="453" y="512" width="3" height="5" fill="#da6666"/>
<rect x="457" y="512" width="3" height="5" fill="#66da66"/>
<rect x="462" y="511" width="3" height="6" fill="#da6666"/>
<rect x="466" y="511" width="3" height="6" fill="#66da66"/>
<rect x="470" y="513" width="3" height="4" fill="#da6666"/>
<rect x="474" y="513" width="3" height="4" fill="#da6666"/>
<rect x="479" y="512" width="3" height="5" fill="#da6666"/>
<rect x="483" y="514" width="3" height="3" fill="#da6666"/>
<rect x="487" y="512" width="3" height="5" fill="#66da66"/>
<rect x="491" y="514" width="3" height="3" fill="#da6666"/>
<rect x="496" y="509" width="3" height="8" fill="#da6666"/>
<rect x="500" y="512" width="3" height="5" fill="#66da66"/>
<rect x="504" y="512" width="3" height="5" fill="#66da66"/>
<rect x="508" y="510" width="3" height="7" fill="#da6666"/>
<rect x="513" y="511" width="3" height="6" fill="#66da66"/>
<rect x="517" y="508" width="3" height="9" fill="#66da66"/>
<rect x="521" y="508" width="3" height="9" fill="#da6666"/>
<rect x="525" y="507" width="3" height="10" fill="#66da66"/>
<rect x="530" y="509" width="3" height="8" fill="#da6666"/>
<rect x="534" y="514" width="3" height="3" fill="#66da66"/>
<rect x="538" y="510" width="3" height="7" fill="#66da66"/>
<rect x="542" y="504" width="3" height="13" fill="#da6666"/>
<rect x="547" y="506" width="3" height="11" fill="#da6666"/>
<rect x="551" y="511" width="3" height="6" fill="#da6666"/>
<rect x="555" y="512" width="3" height="5" fill="#66da66"/>
<rect x="559" y="512" width="3" height="5" fill="#66da66"/>
<rect x="564" y="512" width="3" height="5" fill="#66da66"/>
<rect x="568" y="510" width="3" height="7" fill="#66da66"/>
<rect x="572" y="511" width="3" height="6" fill="#66da66"/>
<rect x="576" y="512" width="3" height="5" fill="#66da66"/>
<rect x="581" y="511" width="3" height="6" fill="#da6666"/>
<rect x="585" y="508" width="3" height="9" fill="#66da66"/>
<rect x="589" y="512" width="3" height="5" fill="#da6666"/>
<rect x="593" y="512" width="3" height="5" fill="#66da66"/>
<rect x="598" y="509" width="3" height="8" fill="#da6666"/>
<rect x="602" y="513" width="3" height="4" fill="#66da66"/>
<rect x="606" y="512" width="3" height="5" fill="#da6666"/>
<rect x="610" y="512" width="3" height="5" fill="#66da66"/>
<rect x="615" y="513" width="3" height="4" fill="#da6666"/>
<rect x="619" y="513" width="3" height="4" fill="#da6666"/>
<rect x="623" y="511" width="3" height="6" fill="#66da66"/>
<rect x="627" y="511" width="3" height="6" fill="#66da66"/>
<rect x="632" y="511" width="3" height="6" fill="#66da66"/>
<rect x="636" y="508" width="3" height="9" fill="#66da66"/>
<rect x="640" y="512" width="3" height="5" fill="#66da66"/>
<rect x="644" y="513" width="3" height="4" fill="#da6666"/>
<rect x="649" y="512" width="3" height="5" fill="#66da66"/>
<rect x="653" y="513" width="3" height="4" fill="#66da66"/>
<rect x="657" y="511" width="3" height="6" fill="#66da66"/>
<rect x="661" y="512" width="3" height="5" fill="#da6666"/>
<rect x="666" y="514" width="3" height="3" fill="#66da66"/>
<rect x="670" y="514" width="3" height="3" fill="#66da66"/>
<rect x="674" y="514" width="3" height="3" fill="#66da66"/>
<rect x="678" y="513" width="3" height="4" fill="#da6666"/>
<rect x="683" y="514" width="3" height="3" fill="#66da66"/>
<rect x="687" y="513" width="3" height="4" fill="#da6666"/>
<rect x="691" y="512" width="3" height="5" fill="#da6666"/>
<rect x="695" y="514" width="3" height="3" fill="#da6666"/>
<rect x="700" y="513" width="3" height="4" fill="#66da66"/>
<rect x="704" y="514" width="3" height="3" fill="#66da66"/>
<rect x="708" y="514" width="3" height="3" fill="#da6666"/>
<rect x="712" y="509" width="3" height="8" fill="#da6666"/>
<rect x="717" y="513" width="3" height="4" fill="#da6666"/>
<rect x="721" y="512" width="3" height="5" fill="#66da66"/>
<rect x="725" y="512" width="3" height="5" fill="#da6666"/>
<rect x="729" y="514" width="3" height="3" fill="#da6666"/>
<rect x="734" y="513" width="3" height="4" fill="#da6666"/>
<rect x="738" y="514" width="3" height="3" fill="#da6666"/>
<rect x="742" y="515" width="3" height="2" fill="#66da66"/>
<rect x="746" y="513" width="3" height="4" fill="#66da66"/>
<rect x="750" y="513" width="3" height="4" fill="#66da66"/>
<rect x="755" y="515" width="3" height="2" fill="#66da66"/>
<rect x="759" y="514" width="3" height="3" fill="#66da66"/>
<rect x="763" y="514" width="3" height="3" fill="#66da66"/>
<rect x="767" y="514" width="3" height="3" fill="#66da66"/>
<rect x="772" y="514" width="3" height="3" fill="#66da66"/>
<rect x="776" y="515" width="3" height="2" fill="#da6666"/>
<rect x="780" y="512" width="3" height="5" fill="#da6666"/>
<rect x="784" y="514" width="3" height="3" fill="#da6666"/>
<rect x="789" y="514" width="3" height="3" fill="#66da66"/>
<rect x="793" y="515" width="3" height="2" fill="#66da66"/>
<rect x="797" y="515" width="3" height="2" fill="#66da66"/>
<rect x="801" y="514" width="3" height="3" fill="#66da66"/>
<rect x="806" y="514" width="3" height="3" fill="#66da66"/>
<rect x="810" y="514" width="3" height="3" fill="#da6666"/>
<rect x="814" y="515" width="3" height="2" fill="#66da66"/>
<rect x="818" y="515" width="3" height="2" fill="#da6666"/>
<rect x="823" y="515" width="3" height="2" fill="#da6666"/>
<rect x="827" y="515" width="3" height="2" fill="#66da66"/>
<rect x="831" y="515" width="3" height="2" fill="#66da66"/>
<rect x="835" y="515" width="3" height="2" fill="#da6666"/>
<rect x="840" y="515" width="3" height="2" fill="#da6666"/>
<rect x="844" y="515" width="3" height="2" fill="#da6666"/>
<rect x="848" y="514" width="3" height="3" fill="#66da66"/>
<rect x="852" y="461" width="3" height="56" fill="#66da66"/>
<rect x="857" y="509" width="3" height="8" fill="#c0c0c0"/>
<rect x="861" y="514" width="3" height="3" fill="#66da66"/>
<rect x="865" y="514" width="3" height="3" fill="#da6666"/>
<rect x="869" y="515" width="3" height="2" fill="#da6666"/>
<rect x="874" y="515" width="3" height="2" fill="#66da66"/>
<rect x="878" y="515" width="3" height="2" fill="#da6666"/>
<rect x="882" y="515" width="3" height="2" fill="#da6666"/>
<rect x="886" y="515" width="3" height="2" fill="#da6666"/>
<rect x="891" y="513" width="3" height="4" fill="#da6666"/>
<rect x="895" y="512" width="3" height="5" fill="#66da66"/>
</g>
<g shape-rendering="crispEdges">
<rect x="3" y="601" width="3" height="1" fill="#007000"/>
<rect x="7" y="601" width="3" height="1" fill="#007000"/>
<rect x="12" y="599" width="3" height="3" fill="#007000"/>
<rect x="16" y="598" width="3" height="4" fill="#007000"/>
<rect x="20" y="598" width="3" height="4" fill="#007000"/>
<rect x="24" y="597" width="3" height="5" fill="#007000"/>
<rect x="29" y="598" width="3" height="4" fill="#007000"/>
<rect x="33" y="599" width="3" height="3" fill="#007000"/>
<rect x="37" y="598" width="3" height="4" fill="#007000"/>
<rect x="41" y="599" width="3" height="3" fill="#007000"/>
<rect x="46" y="600" width="3" height="2" fill="#007000"/>
<rect x="50" y="601" width="3" height="1" fill="#007000"/>
<rect x="54" y="601" width="3" height="2" fill="#007000"/>
<rect x="58" y="601" width="3" height="2" fill="#007000"/>
<rect x="63" y="601" width="3" height="1" fill="#007000"/>
<rect x="67" y="601" width="3" height="1" fill="#007000"/>
<rect x="71" y="601" width="3" height="1" fill="#007000"/>
<rect x="75" y="601" width="3" height="1" fill="#007000"/>
<rect x="80" y="600" width="3" height="2" fill="#007000"/>
<rect x="84" y="599" width="3" height="3" fill="#007000"/>
<rect x="88" y="599" width="3" height="3" fill="#007000"/>
<rect x="92" y="598" width="3" height="4" fill="#007000"/>
<rect x="97" y="598" width="3" height="4" fill="#007000"/>
<rect x="101" y="597" width="3" height="5" fill="#007000"/>
<rect x="105" y="596" width="3" height="6" fill="#007000"/>
<rect x="109" y="594" width="3" height="8" fill="#007000"/>
<rect x="114" y="592" width="3" height="10" fill="#007000"/>
<rect x="118" y="591" width="3" height="11" fill="#007000"/>
<rect x="122" y="591" width="3" height="11" fill="#007000"/>
<rect x="126" y="591" width="3" height="11" fill="#007000"/>
<rect x="131" y="591" width="3" height="11" fill="#007000"/>
<rect x="135" y="588" width="3" height="14" fill="#007000"/>
<rect x="139" y="585" width="3" height="17" fill="#007000"/>
<rect x="143" y="585" width="3" height="17" fill="#007000"/>
<rect x="148" y="587" width="3" height="15" fill="#007000"/>
<rect x="152" y="591" width="3" height="11" fill="#007000"/>
<rect x="156" y="593" width="3" height="9" fill="#007000"/>
<rect x="160" y="596" width="3" height="6" fill="#007000"/>
<rect x="164" y="600" width="3" height="2" fill="#007000"/>
<rect x="169" y="601" width="3" height="2" fill="#007000"/>
<rect x="173" y="601" width="3" height="1" fill="#007000"/>
<rect x="177" y="601" width="3" height="1" fill="#007000"/>
<rect x="181" y="601" width="3" height="1" fill="#007000"/>
<rect x="186" y="601" width="3" height="2" fill="#007000"/>
<rect x="190" y="601" width="3" height="4" fill="#007000"/>
<rect x="194" y="601" width="3" height="6" fill="#007000"/>
<rect x="198" y="601" width="3" height="5" fill="#007000"/>
<rect x="203" y="601" width="3" height="14" fill="#007000"/>
<rect x="207" y="601" width="3" height="19" fill="#007000"/>
<rect x="211" y="601" width="3" height="21" fill="#007000"/>
<rect x="215" y="601" width="3" height="23" fill="#007000"/>
<rect x="220" y="601" width="3" height="21" fill="#007000"/>
<rect x="224" y="601" width="3" height="21" fill="#007000"/>
<rect x="228" y="601" width="3" height="20" fill="#007000"/>
<rect x="232" y="601" width="3" height="19" fill="#007000"/>
<rect x="237" y="601" width="3" height="16" fill="#007000"/>
<rect x="241" y="601" width="3" height="15" fill="#007000"/>
<rect x="245" y="601" width="3" height="14" fill="#007000"/>
<rect x="249" y="601" width="3" height="12" fill="#007000"/>
<rect x="254" y="601" width="3" height="9" fill="#007000"/>
<rect x="258" y="601" width="3" height="8" fill="#007000"/>
<rect x="262" y="601" width="3" height="6" fill="#007000"/>
<rect x="266" y="601" width="3" height="5" fill="#007000"/>
<rect x="271" y="601" width="3" height="3" fill="#007000"/>
<rect x="275" y="601" width="3" height="1" fill="#007000"/>
<rect x="279" y="600" width="3" height="2" fill="#007000"/>
<rect x="283" y="598" width="3" height="4" fill="#007000"/>
<rect x="288" y="596" width="3" height="6" fill="#007000"/>
<rect x="292" y="595" width="3" height="7" fill="#007000"/>
<rect x="296" y="594" width="3" height="8" fill="#007000"/>
<rect x="300" y="595" width="3" height="7" fill="#007000"/>
<rect x="305" y="596" width="3" height="6" fill="#007000"/>
<rect x="309" y="597" width="3" height="5" fill="#007000"/>
<rect x="313" y="599" width="3" height="3" fill="#007000"/>
<rect x="317" y="599" width="3" height="3" fill="#007000"/>
<rect x="322" y="599" width="3" height="3" fill="#007000"/>
<rect x="326" y="600" width="3" height="2" fill="#007000"/>
<rect x="330" y="599" width="3" height="3" fill="#007000"/>
<rect x="334" y="599" width="3" height="3" fill="#007000"/>
<rect x="339" y="599" width="3" height="3" fill="#007000"/>
<rect x="343" y="598" width="3" height="4" fill="#007000"/>
<rect x="347" y="599" width="3" height="3" fill="#007000"/>
<rect x="351" y="600" width="3" height="2" fill="#007000"/>
<rect x="356" y="599" width="3" height="3" fill="#007000"/>
<rect x="360" y="598" width="3" height="4" fill="#007000"/>
<rect x="364" y="601" width="3" height="1" fill="#007000"/>
<rect x="368" y="601" width="3" height="1" fill="#007000"/>
<rect x="373" y="601" width="3" height="2" fill="#007000"/>
<rect x="377" y="601" width="3" height="3" fill="#007000"/>
<rect x="381" y="601" width="3" height="3" fill="#007000"/>
<rect x="385" y="601" width="3" height="3" fill="#007000"/>
<rect x="390" y="601" width="3" height="3" fill="#007000"/>
<rect x="394" y="601" width="3" height="1" fill="#007000"/>
<rect x="398" y="601" width="3" height="1" fill="#007000"/>
<rect x="402" y="601" width="3" height="3" fill="#007000"/>
<rect x="407" y="601" width="3" height="3" fill="#007000"/>
<rect x="411" y="601" width="3" height="4" fill="#007000"/>
<rect x="415" y="601" width="3" height="4" fill="#007000"/>
<rect x="419" y="601" width="3" height="3" fill="#007000"/>
<rect x="424" y="601" width="3" height="1" fill="#007000"/>
<rect x="428" y="601" width="3" height="1" fill="#007000"/>
<rect x="432" y="600" width="3" height="2" fill="#007000"/>
<rect x="436" y="601" width="3" height="1" fill="#007000"/>
<rect x="441" y="601" width="3" height="1" fill="#007000"/>
<rect x="445" y="601" width="3" height="1" fill="#007000"/>
<rect x="449" y="599" width="3" height="3" fill="#007000"/>
<rect x="453" y="601" width="3" height="1" fill="#007000"/>
<rect x="457" y="601" width="3" height="1" fill="#007000"/>
<rect x="462" y="600" width="3" height="2" fill="#007000"/>
<rect x="466" y="599" width="3" height="3" fill="#007000"/>
<rect x="470" y="599" width="3" height="3" fill="#007000"/>
<rect x="474" y="599" width="3" height="3" fill="#007000"/>
<rect x="479" y="600" width="3" height="2" fill="#007000"/>
<rect x="483" y="600" width="3" height="2" fill="#007000"/>
<rect x="487" y="599" width="3" height="3" fill="#007000"/>
<rect x="491" y="600" width="3" height="2" fill="#007000"/>
<rect x="496" y="601" width="3" height="1" fill="#007000"/>
<rect x="500" y="601" width="3" height="1" fill="#007000"/>
<rect x="504" y="601" width="3" height="1" fill="#007000"/>
<rect x="508" y="601" width="3" height="1" fill="#007000"/>
<rect x="513" y="601" width="3" height="1" fill="#007000"/>
<rect x="517" y="601" width="3" height="1" fill="#007000"/>
<rect x="521" y="601" width="3" height="1" fill="#007000"/>
<rect x="525" y="601" width="3" height="1" fill="#007000"/>
<rect x="530" y="601" width="3" height="1" fill="#007000"/>
<rect x="534" y="600" width="3" height="2" fill="#007000"/>
<rect x="538" y="599" width="3" height="3" fill="#007000"/>
<rect x="542" y="599" width="3" height="3" fill="#007000"/>
<rect x="547" y="599" width="3" height="3" fill="#007000"/>
<rect x="551" y="599" width="3" height="3" fill="#007000"/>
<rect x="555" y="599" width="3" height="3" fill="#007000"/>
<rect x="559" y="599" width="3" height="3" fill="#007000"/>
<rect x="564" y="598" width="3" height="4" fill="#007000"/>
<rect x="568" y="597" width="3" height="5" fill="#007000"/>
<rect x="572" y="597" width="3" height="5" fill="#007000"/>
<rect x="576" y="596" width="3" height="6" fill="#007000"/>
<rect x="581" y="597" width="3" height="5" fill="#007000"/>
<rect x="585" y="597" width="3" height="5" fill="#007000"/>
<rect x="589" y="597" width="3" height="5" fill="#007000"/>
<rect x="593" y="598" width="3" height="4" fill="#007000"/>
<rect x="598" y="598" width="3" height="4" fill="#007000"/>
<rect x="602" y="598" width="3" height="4" fill="#007000"/>
<rect x="606" y="599" width="3" height="3" fill="#007000"/>
<rect x="610" y="599" width="3" height="3" fill="#007000"/>
<rect x="615" y="599" width="3" height="3" fill="#007000"/>
<rect x="619" y="599" width="3" height="3" fill="#007000"/>
<rect x="623" y="599" width="3" height="3" fill="#007000"/>
<rect x="627" y="599" width="3" height="3" fill="#007000"/>
<rect x="632" y="599" width="3" height="3" fill="#007000"/>
<rect x="636" y="598" width="3" height="4" fill="#007000"/>
<rect x="640" y="598" width="3" height="4" fill="#007000"/>
<rect x="644" y="598" width="3" height="4" fill="#007000"/>
<rect x="649" y="598" width="3" height="4" fill="#007000"/>
<rect x="653" y="598" width="3" height="4" fill="#007000"/>
<rect x="657" y="598" width="3" height="4" fill="#007000"/>
<rect x="661" y="598" width="3" height="4" fill="#007000"/>
<rect x="666" y="599" width="3" height="3" fill="#007000"/>
<rect x="670" y="599" width="3" height="3" fill="#007000"/>
<rect x="674" y="599" width="3" height="3" fill="#007000"/>
<rect x="678" y="599" width="3" height="3" fill="#007000"/>
<rect x="683" y="599" width="3" height="3" fill="#007000"/>
<rect x="687" y="599" width="3" height="3" fill="#007000"/>
<rect x="691" y="601" width="3" height="1" fill="#007000"/>
<rect x="695" y="601" width="3" height="1" fill="#007000"/>
<rect x="700" y="601" width="3" height="1" fill="#007000"/>
<rect x="704" y="601" width="3" height="1" fill="#007000"/>
<rect x="708" y="601" width="3" height="1" fill="#007000"/>
<rect x="712" y="601" width="3" height="2" fill="#007000"/>
<rect x="717" y="601" width="3" height="3" fill="#007000"/>
<rect x="721" y="601" width="3" height="3" fill="#007000"/>
<rect x="725" y="601" width="3" height="2" fill="#007000"/>
<rect x="729" y="601" width="3" height="2" fill="#007000"/>
<rect x="734" y="601" width="3" height="2" fill="#007000"/>
<rect x="738" y="601" width="3" height="2" fill="#007000"/>
<rect x="742" y="601" width="3" height="1" fill="#007000"/>
<rect x="746" y="601" width="3" height="1" fill="#007000"/>
<rect x="750" y="601" width="3" height="1" fill="#007000"/>
<rect x="755" y="601" width="3" height="1" fill="#007000"/>
<rect x="759" y="601" width="3" height="1" fill="#007000"/>
<rect x="763" y="601" width="3" height="1" fill="#007000"/>
<rect x="767" y="601" width="3" height="1" fill="#007000"/>
<rect x="772" y="601" width="3" height="1" fill="#007000"/>
<rect x="776" y="599" width="3" height="3" fill="#007000"/>
<rect x="780" y="599" width="3" height="3" fill="#007000"/>
<rect x="784" y="601" width="3" height="1" fill="#007000"/>
<rect x="789" y="601" width="3" height="1" fill="#007000"/>
<rect x="793" y="601" width="3" height="1" fill="#007000"/>
<rect x="797" y="601" width="3" height="1" fill="#007000"/>
<rect x="801" y="601" width="3" height="1" fill="#007000"/>
<rect x="806" y="600" width="3" height="2" fill="#007000"/>
<rect x="810" y="600" width="3" height="2" fill="#007000"/>
<rect x="814" y="600" width="3" height="2" fill="#007000"/>
<rect x="818" y="600" width="3" height="2" fill="#007000"/>
<rect x="823" y="601" width="3" height="1" fill="#007000"/>
<rect x="827" y="601" width="3" height="1" fill="#007000"/>
<rect x="831" y="601" width="3" height="1" fill="#007000"/>
<rect x="835" y="601" width="3" height="1" fill="#007000"/>
<rect x="840" y="601" width="3" height="1" fill="#007000"/>
<rect x="844" y="601" width="3" height="1" fill="#007000"/>
<rect x="848" y="601" width="3" height="1" fill="#007000"/>
<rect x="852" y="601" width="3" height="1" fill="#007000"/>
<rect x="857" y="601" width="3" height="1" fill="#007000"/>
<rect x="861" y="601" width="3" height="1" fill="#007000"/>
<rect x="865" y="601" width="3" height="1" fill="#007000"/>
<rect x="869" y="601" width="3" height="1" fill="#007000"/>
<rect x="874" y="601" width="3" height="1" fill="#007000"/>
<rect x="878" y="601" width="3" height="1" fill="#007000"/>
<rect x="882" y="601" width="3" height="1" fill="#007000"/>
<rect x="886" y="601" width="3" height="1" fill="#007000"/>
<rect x="891" y="601" width="3" height="1" fill="#007000"/>
<rect x="895" y="601" width="3" height="1" fill="#007000"/>
</g>
<path d="M4.10,601.20 C5.87,600.95 10.47,600.27 14.70,599.70 C18.93,599.13 24.58,598.37 29.50,597.80 C34.42,597.23 39.28,596.47 44.20,596.30 C49.12,596.13 54.08,596.63 59.00,596.80 C63.92,596.97 68.78,597.27 73.70,597.30 C78.62,597.33 83.58,597.53 88.50,597.00 C93.42,596.47 99.27,595.20 103.20,594.10 C107.13,593.00 109.97,591.27 112.10,590.40 C114.23,589.53 113.88,590.00 116.00,588.90 C118.12,587.80 121.60,585.63 124.80,583.80 C128.00,581.97 131.75,580.48 135.20,577.90 C138.65,575.32 142.55,570.82 145.50,568.30 C148.45,565.78 150.20,564.15 152.90,562.80 C155.60,561.45 159.00,560.63 161.70,560.20 C164.40,559.77 164.92,559.92 169.10,560.20 C173.28,560.48 181.63,561.07 186.80,561.90 C191.97,562.73 196.58,563.60 200.10,565.20 C203.62,566.80 205.22,568.53 207.90,571.50 C210.58,574.47 212.60,578.33 216.20,583.00 C219.80,587.67 225.80,595.57 229.50,599.50 C233.20,603.43 235.20,603.93 238.40,606.60 C241.60,609.27 245.52,613.03 248.70,615.50 C251.88,617.97 254.30,619.80 257.50,621.40 C260.70,623.00 264.95,624.37 267.90,625.10 C270.85,625.83 272.50,625.80 275.20,625.80 C277.90,625.80 281.15,625.67 284.10,625.10 C287.05,624.53 289.47,623.52 292.90,622.40 C296.33,621.28 300.77,619.38 304.70,618.40 C308.63,617.42 312.07,616.98 316.50,616.50 C320.93,616.02 326.38,615.83 331.30,615.50 C336.22,615.17 341.10,615.00 346.00,614.50 C350.90,614.00 355.78,612.58 360.70,612.50 C365.62,612.42 370.58,613.38 375.50,614.00 C380.42,614.62 385.28,615.47 390.20,616.20 C395.12,616.93 400.08,617.67 405.00,618.40 C409.92,619.13 414.78,620.23 419.70,620.60 C424.62,620.97 429.58,620.72 434.50,620.60 C439.42,620.48 444.78,620.08 449.20,619.90 C453.62,619.72 456.58,619.82 461.00,619.50 C465.42,619.18 470.78,618.35 475.70,618.00 C480.62,617.65 485.58,617.40 490.50,617.40 C495.42,617.40 500.28,617.83 505.20,618.00 C510.12,618.17 515.08,618.33 520.00,618.40 C524.92,618.47 529.78,618.63 534.70,618.40 C539.62,618.17 544.58,617.62 549.50,617.00 C554.42,616.38 559.78,615.32 564.20,614.70 C568.62,614.08 571.58,614.15 576.00,613.30 C580.42,612.45 585.78,610.53 590.70,609.60 C595.62,608.67 600.58,608.27 605.50,607.70 C610.42,607.13 615.28,606.80 620.20,606.20 C625.12,605.60 630.08,604.77 635.00,604.10 C639.92,603.43 644.78,602.88 649.70,602.20 C654.62,601.52 659.58,600.67 664.50,600.00 C669.42,599.33 675.27,598.70 679.20,598.20 C683.13,597.70 685.30,597.00 688.10,597.00 C690.90,597.00 693.07,597.90 696.00,598.20 C698.93,598.50 701.62,598.38 705.70,598.80 C709.78,599.22 715.58,600.05 720.50,600.70 C725.42,601.35 730.28,602.03 735.20,602.70 C740.12,603.37 745.08,604.47 750.00,604.70 C754.92,604.93 759.78,604.35 764.70,604.10 C769.62,603.85 774.58,603.43 779.50,603.20 C784.42,602.97 789.78,602.87 794.20,602.70 C798.62,602.53 801.53,602.57 806.00,602.20 C810.47,601.83 816.00,600.78 821.00,600.50 C826.00,600.22 831.00,600.42 836.00,600.50 C841.00,600.58 846.00,600.95 851.00,601.00 C856.00,601.05 861.00,600.80 866.00,600.80 C871.00,600.80 876.00,600.88 881.00,601.00 C886.00,601.12 893.50,601.42 896.00,601.50" fill="none" stroke="#ff00ff" stroke-width="1.2"/>
<path d="M4.10,601.20 C5.87,600.63 11.20,598.87 14.70,597.80 C18.20,596.73 21.90,595.17 25.10,594.80 C28.30,594.43 31.45,595.67 33.90,595.60 C36.35,595.53 37.58,594.35 39.80,594.40 C42.02,594.45 44.50,595.33 47.20,595.90 C49.90,596.47 52.80,597.42 56.00,597.80 C59.20,598.18 62.95,598.20 66.40,598.20 C69.85,598.20 73.52,598.18 76.70,597.80 C79.88,597.42 82.55,596.57 85.50,595.90 C88.45,595.23 91.45,594.60 94.40,593.80 C97.35,593.00 100.25,592.77 103.20,591.10 C106.15,589.43 109.97,585.57 112.10,583.80 C114.23,582.03 114.12,581.98 116.00,580.50 C117.88,579.02 120.82,576.62 123.40,574.90 C125.98,573.18 129.05,572.42 131.50,570.20 C133.95,567.98 135.88,564.38 138.10,561.60 C140.32,558.82 142.95,555.08 144.80,553.50 C146.65,551.92 147.85,552.10 149.20,552.10 C150.55,552.10 150.93,553.02 152.90,553.50 C154.87,553.98 158.80,554.02 161.00,555.00 C163.20,555.98 164.50,558.17 166.10,559.40 C167.70,560.63 168.63,561.73 170.60,562.40 C172.57,563.07 175.20,563.15 177.90,563.40 C180.60,563.65 183.85,562.92 186.80,563.90 C189.75,564.88 193.38,568.20 195.60,569.30 C197.82,570.40 198.37,567.85 200.10,570.50 C201.83,573.15 203.80,580.03 206.00,585.20 C208.20,590.37 211.10,597.32 213.30,601.50 C215.50,605.68 216.73,607.48 219.20,610.30 C221.67,613.12 224.90,615.93 228.10,618.40 C231.30,620.87 235.22,623.37 238.40,625.10 C241.58,626.83 244.50,627.90 247.20,628.80 C249.90,629.70 251.90,630.33 254.60,630.50 C257.30,630.67 260.45,630.22 263.40,629.80 C266.35,629.38 269.35,628.92 272.30,628.00 C275.25,627.08 278.15,625.77 281.10,624.30 C284.05,622.83 287.05,620.92 290.00,619.20 C292.95,617.48 296.58,614.93 298.80,614.00 C301.02,613.07 301.57,613.55 303.30,613.60 C305.03,613.65 307.00,613.92 309.20,614.30 C311.40,614.68 313.55,615.70 316.50,615.90 C319.45,616.10 323.45,615.88 326.90,615.50 C330.35,615.12 334.02,614.02 337.20,613.60 C340.38,613.18 343.30,613.18 346.00,613.00 C348.70,612.82 350.95,612.95 353.40,612.50 C355.85,612.05 358.25,610.12 360.70,610.30 C363.15,610.48 365.15,612.42 368.10,613.60 C371.05,614.78 374.72,616.60 378.40,617.40 C382.08,618.20 386.75,618.23 390.20,618.40 C393.65,618.57 396.13,617.90 399.10,618.40 C402.07,618.90 405.05,620.60 408.00,621.40 C410.95,622.20 413.87,623.20 416.80,623.20 C419.73,623.20 422.65,621.83 425.60,621.40 C428.55,620.97 430.57,621.02 434.50,620.60 C438.43,620.18 444.78,619.13 449.20,618.90 C453.62,618.67 457.07,619.52 461.00,619.20 C464.93,618.88 469.12,617.25 472.80,617.00 C476.48,616.75 480.40,617.75 483.10,617.70 C485.80,617.65 486.30,616.65 489.00,616.70 C491.70,616.75 495.62,617.63 499.30,618.00 C502.98,618.37 507.15,618.70 511.10,618.90 C515.05,619.10 519.07,619.35 523.00,619.20 C526.93,619.05 531.77,618.45 534.70,618.00 C537.63,617.55 537.15,617.00 540.60,616.50 C544.05,616.00 550.97,615.90 555.40,615.00 C559.83,614.10 563.77,612.08 567.20,611.10 C570.63,610.12 571.58,609.92 576.00,609.10 C580.42,608.28 587.55,606.78 593.70,606.20 C599.85,605.62 606.52,605.95 612.90,605.60 C619.28,605.25 627.08,604.73 632.00,604.10 C636.92,603.47 638.22,602.48 642.40,601.80 C646.58,601.12 652.43,600.55 657.10,600.00 C661.77,599.45 666.72,599.12 670.40,598.50 C674.08,597.88 676.25,596.73 679.20,596.30 C682.15,595.87 684.17,595.40 688.10,595.90 C692.03,596.40 697.40,598.25 702.80,599.30 C708.20,600.35 715.10,601.40 720.50,602.20 C725.90,603.00 730.78,603.43 735.20,604.10 C739.62,604.77 743.30,605.95 747.00,606.20 C750.70,606.45 753.22,605.95 757.40,605.60 C761.58,605.25 767.18,604.58 772.10,604.10 C777.02,603.62 781.98,603.08 786.90,602.70 C791.82,602.32 797.58,602.13 801.60,601.80 C805.62,601.47 807.77,600.97 811.00,600.70 C814.23,600.43 816.83,600.18 821.00,600.20 C825.17,600.22 831.50,600.50 836.00,600.80 C840.50,601.10 844.33,601.97 848.00,602.00 C851.67,602.03 854.33,601.13 858.00,601.00 C861.67,600.87 866.00,601.03 870.00,601.20 C874.00,601.37 877.67,601.78 882.00,602.00 C886.33,602.22 893.67,602.42 896.00,602.50" fill="none" stroke="#0000ff" stroke-width="1.2"/>
<defs><clipPath id="c70"><rect x="2" y="685" width="896" height="36.5"/></clipPath><clipPath id="c30"><rect x="2" y="768.5" width="896" height="36"/></clipPath></defs>
<polygon points="64.50,735.20 68.50,736.10 72.50,731.90 76.50,741.50 81.50,728.70 85.50,732.50 89.50,731.00 93.50,728.10 98.50,726.20 102.50,723.70 106.50,716.60 110.50,711.40 115.50,709.30 119.50,708.40 123.50,707.00 127.50,706.10 132.50,703.80 136.50,698.80 140.50,696.90 144.50,697.50 149.50,710.90 153.50,718.50 157.50,716.60 161.50,716.60 165.50,732.90 170.50,729.40 174.50,724.80 178.50,722.40 182.50,721.80 187.50,721.00 191.50,728.70 195.50,737.70 199.50,729.40 204.50,760.10 208.50,761.20 212.50,761.60 216.50,762.60 221.50,760.70 225.50,761.30 229.50,763.20 233.50,765.40 238.50,762.20 242.50,763.50 246.50,765.40 250.50,767.70 255.50,764.50 259.50,761.60 263.50,762.20 267.50,762.20 272.50,761.00 276.50,755.30 280.50,758.40 284.50,754.50 289.50,747.60 293.50,746.30 297.50,746.30 301.50,751.10 306.50,755.90 310.50,760.30 314.50,761.60 318.50,760.70 323.50,757.80 327.50,760.70 331.50,754.50 335.50,755.30 340.50,754.50 344.50,754.50 348.50,758.40 352.50,759.70 357.50,751.50 361.50,750.10 365.50,766.00 369.50,762.60 374.50,768.30 378.50,769.80 382.50,762.60 386.50,764.50 391.50,764.50 395.50,763.50 399.50,768.10 403.50,771.50 408.50,773.70 412.50,776.00 416.50,770.60 420.50,767.90 425.50,764.10 429.50,762.20 433.50,765.40 437.50,769.30 442.50,761.00 446.50,765.40 450.50,763.00 454.50,767.40 458.50,763.00 463.50,766.80 467.50,757.20 471.50,757.80 475.50,762.20 480.50,764.90 484.50,765.40 488.50,759.10 492.50,764.10 497.50,767.90 501.50,766.80 505.50,766.40 509.50,771.20 514.50,770.20 518.50,769.30 522.50,771.20 526.50,763.50 531.50,766.00 535.50,764.90 539.50,758.40 543.50,763.00 548.50,763.50 552.50,765.40 556.50,762.60 560.50,754.90 565.50,750.70 569.50,748.20 573.50,746.90 577.50,747.80 582.50,752.40 586.50,751.40 590.50,753.30 594.50,749.50 599.50,755.20 603.50,753.30 607.50,753.70 611.50,750.40 616.50,752.90 620.50,754.80 624.50,751.80 628.50,748.50 633.50,745.70 637.50,738.00 641.50,735.10 645.50,742.80 650.50,739.00 654.50,736.50 658.50,731.30 662.50,734.50 667.50,732.60 671.50,730.70 675.50,725.00 679.50,728.40 684.50,727.50 688.50,733.20 692.50,746.60 696.50,753.30 701.50,753.30 705.50,749.90 709.50,752.90 713.50,755.20 718.50,758.70 722.50,758.70 726.50,761.40 730.50,764.40 735.50,766.30 739.50,770.20 743.50,762.20 747.50,759.70 751.50,753.70 756.50,752.60 760.50,751.30 764.50,750.90 768.50,745.00 773.50,741.40 777.50,743.40 781.50,744.70 785.50,749.60 790.50,747.60 794.50,746.30 798.50,745.00 802.50,740.60 807.50,731.20 811.50,731.80 815.50,731.20 819.50,747.20 824.50,748.80 828.50,746.00 832.50,742.20 836.50,746.30 841.50,755.40 845.50,756.20 849.50,754.20 853.50,737.30 858.50,736.90 862.50,736.90 866.50,750.40 870.50,750.40 875.50,750.40 879.50,755.40 883.50,756.50 887.50,757.50 892.50,758.70 896.50,749.30 896.50,721.5 64.50,721.5" fill="#ff6060" clip-path="url(#c70)"/>
<polygon points="64.50,735.20 68.50,736.10 72.50,731.90 76.50,741.50 81.50,728.70 85.50,732.50 89.50,731.00 93.50,728.10 98.50,726.20 102.50,723.70 106.50,716.60 110.50,711.40 115.50,709.30 119.50,708.40 123.50,707.00 127.50,706.10 132.50,703.80 136.50,698.80 140.50,696.90 144.50,697.50 149.50,710.90 153.50,718.50 157.50,716.60 161.50,716.60 165.50,732.90 170.50,729.40 174.50,724.80 178.50,722.40 182.50,721.80 187.50,721.00 191.50,728.70 195.50,737.70 199.50,729.40 204.50,760.10 208.50,761.20 212.50,761.60 216.50,762.60 221.50,760.70 225.50,761.30 229.50,763.20 233.50,765.40 238.50,762.20 242.50,763.50 246.50,765.40 250.50,767.70 255.50,764.50 259.50,761.60 263.50,762.20 267.50,762.20 272.50,761.00 276.50,755.30 280.50,758.40 284.50,754.50 289.50,747.60 293.50,746.30 297.50,746.30 301.50,751.10 306.50,755.90 310.50,760.30 314.50,761.60 318.50,760.70 323.50,757.80 327.50,760.70 331.50,754.50 335.50,755.30 340.50,754.50 344.50,754.50 348.50,758.40 352.50,759.70 357.50,751.50 361.50,750.10 365.50,766.00 369.50,762.60 374.50,768.30 378.50,769.80 382.50,762.60 386.50,764.50 391.50,764.50 395.50,763.50 399.50,768.10 403.50,771.50 408.50,773.70 412.50,776.00 416.50,770.60 420.50,767.90 425.50,764.10 429.50,762.20 433.50,765.40 437.50,769.30 442.50,761.00 446.50,765.40 450.50,763.00 454.50,767.40 458.50,763.00 463.50,766.80 467.50,757.20 471.50,757.80 475.50,762.20 480.50,764.90 484.50,765.40 488.50,759.10 492.50,764.10 497.50,767.90 501.50,766.80 505.50,766.40 509.50,771.20 514.50,770.20 518.50,769.30 522.50,771.20 526.50,763.50 531.50,766.00 535.50,764.90 539.50,758.40 543.50,763.00 548.50,763.50 552.50,765.40 556.50,762.60 560.50,754.90 565.50,750.70 569.50,748.20 573.50,746.90 577.50,747.80 582.50,752.40 586.50,751.40 590.50,753.30 594.50,749.50 599.50,755.20 603.50,753.30 607.50,753.70 611.50,750.40 616.50,752.90 620.50,754.80 624.50,751.80 628.50,748.50 633.50,745.70 637.50,738.00 641.50,735.10 645.50,742.80 650.50,739.00 654.50,736.50 658.50,731.30 662.50,734.50 667.50,732.60 671.50,730.70 675.50,725.00 679.50,728.40 684.50,727.50 688.50,733.20 692.50,746.60 696.50,753.30 701.50,753.30 705.50,749.90 709.50,752.90 713.50,755.20 718.50,758.70 722.50,758.70 726.50,761.40 730.50,764.40 735.50,766.30 739.50,770.20 743.50,762.20 747.50,759.70 751.50,753.70 756.50,752.60 760.50,751.30 764.50,750.90 768.50,745.00 773.50,741.40 777.50,743.40 781.50,744.70 785.50,749.60 790.50,747.60 794.50,746.30 798.50,745.00 802.50,740.60 807.50,731.20 811.50,731.80 815.50,731.20 819.50,747.20 824.50,748.80 828.50,746.00 832.50,742.20 836.50,746.30 841.50,755.40 845.50,756.20 849.50,754.20 853.50,737.30 858.50,736.90 862.50,736.90 866.50,750.40 870.50,750.40 875.50,750.40 879.50,755.40 883.50,756.50 887.50,757.50 892.50,758.70 896.50,749.30 896.50,768.5 64.50,768.5" fill="#6060ff" clip-path="url(#c30)"/>
<rect x="2" y="721" width="896" height="1" fill="#ff5555" shape-rendering="crispEdges"/>
<rect x="2" y="768" width="896" height="1" fill="#5555ff" shape-rendering="crispEdges"/>
<polyline points="64.5,735.2 68.5,736.1 72.5,731.9 76.5,741.5 81.5,728.7 85.5,732.5 89.5,731.0 93.5,728.1 98.5,726.2 102.5,723.7 106.5,716.6 110.5,711.4 115.5,709.3 119.5,708.4 123.5,707.0 127.5,706.1 132.5,703.8 136.5,698.8 140.5,696.9 144.5,697.5 149.5,710.9 153.5,718.5 157.5,716.6 161.5,716.6 165.5,732.9 170.5,729.4 174.5,724.8 178.5,722.4 182.5,721.8 187.5,721.0 191.5,728.7 195.5,737.7 199.5,729.4 204.5,760.1 208.5,761.2 212.5,761.6 216.5,762.6 221.5,760.7 225.5,761.3 229.5,763.2 233.5,765.4 238.5,762.2 242.5,763.5 246.5,765.4 250.5,767.7 255.5,764.5 259.5,761.6 263.5,762.2 267.5,762.2 272.5,761.0 276.5,755.3 280.5,758.4 284.5,754.5 289.5,747.6 293.5,746.3 297.5,746.3 301.5,751.1 306.5,755.9 310.5,760.3 314.5,761.6 318.5,760.7 323.5,757.8 327.5,760.7 331.5,754.5 335.5,755.3 340.5,754.5 344.5,754.5 348.5,758.4 352.5,759.7 357.5,751.5 361.5,750.1 365.5,766.0 369.5,762.6 374.5,768.3 378.5,769.8 382.5,762.6 386.5,764.5 391.5,764.5 395.5,763.5 399.5,768.1 403.5,771.5 408.5,773.7 412.5,776.0 416.5,770.6 420.5,767.9 425.5,764.1 429.5,762.2 433.5,765.4 437.5,769.3 442.5,761.0 446.5,765.4 450.5,763.0 454.5,767.4 458.5,763.0 463.5,766.8 467.5,757.2 471.5,757.8 475.5,762.2 480.5,764.9 484.5,765.4 488.5,759.1 492.5,764.1 497.5,767.9 501.5,766.8 505.5,766.4 509.5,771.2 514.5,770.2 518.5,769.3 522.5,771.2 526.5,763.5 531.5,766.0 535.5,764.9 539.5,758.4 543.5,763.0 548.5,763.5 552.5,765.4 556.5,762.6 560.5,754.9 565.5,750.7 569.5,748.2 573.5,746.9 577.5,747.8 582.5,752.4 586.5,751.4 590.5,753.3 594.5,749.5 599.5,755.2 603.5,753.3 607.5,753.7 611.5,750.4 616.5,752.9 620.5,754.8 624.5,751.8 628.5,748.5 633.5,745.7 637.5,738.0 641.5,735.1 645.5,742.8 650.5,739.0 654.5,736.5 658.5,731.3 662.5,734.5 667.5,732.6 671.5,730.7 675.5,725.0 679.5,728.4 684.5,727.5 688.5,733.2 692.5,746.6 696.5,753.3 701.5,753.3 705.5,749.9 709.5,752.9 713.5,755.2 718.5,758.7 722.5,758.7 726.5,761.4 730.5,764.4 735.5,766.3 739.5,770.2 743.5,762.2 747.5,759.7 751.5,753.7 756.5,752.6 760.5,751.3 764.5,750.9 768.5,745.0 773.5,741.4 777.5,743.4 781.5,744.7 785.5,749.6 790.5,747.6 794.5,746.3 798.5,745.0 802.5,740.6 807.5,731.2 811.5,731.8 815.5,731.2 819.5,747.2 824.5,748.8 828.5,746.0 832.5,742.2 836.5,746.3 841.5,755.4 845.5,756.2 849.5,754.2 853.5,737.3 858.5,736.9 862.5,736.9 866.5,750.4 870.5,750.4 875.5,750.4 879.5,755.4 883.5,756.5 887.5,757.5 892.5,758.7 896.5,749.3" fill="none" stroke="#800080" stroke-width="1.0" stroke-linejoin="round"/>
</svg></body></html>
